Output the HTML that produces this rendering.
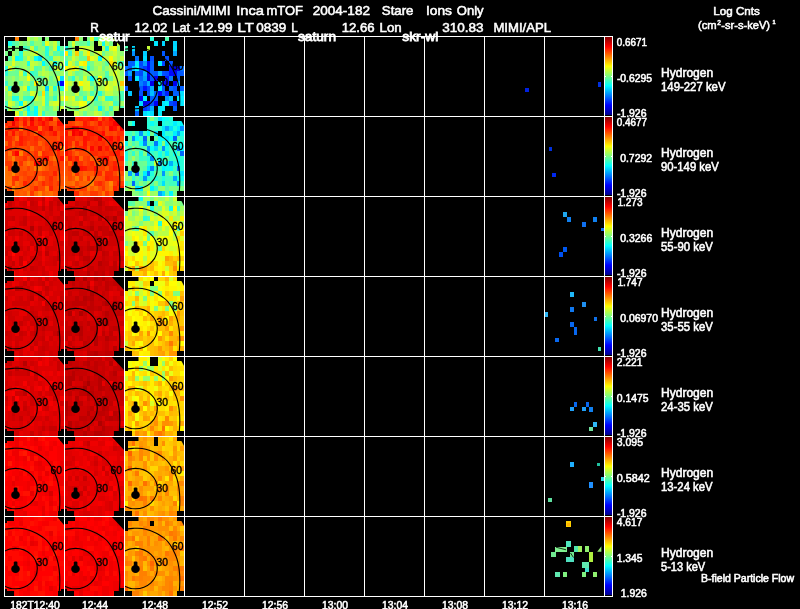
<!DOCTYPE html><html><head><meta charset="utf-8"><title>Cassini MIMI Inca mTOF</title><style>html,body{margin:0;padding:0;background:#000;overflow:hidden}svg{display:block}</style></head><body><svg width="800" height="609" viewBox="0 0 800 609" font-family="Liberation Sans, Arial, Helvetica, sans-serif">
<defs><filter id="gray" x="0" y="0" width="800" height="609" filterUnits="userSpaceOnUse" color-interpolation-filters="sRGB"><feColorMatrix type="saturate" values="0"/></filter><linearGradient id="jet" x1="0" y1="0" x2="0" y2="1"><stop offset="0" stop-color="#800000"/><stop offset="0.125" stop-color="#ff0000"/><stop offset="0.375" stop-color="#ffff00"/><stop offset="0.5" stop-color="#80ff80"/><stop offset="0.625" stop-color="#00ffff"/><stop offset="0.875" stop-color="#0000ff"/><stop offset="1" stop-color="#000090"/></linearGradient><g id="ov" fill="none" stroke="#000" stroke-width="1.1"><ellipse cx="11.5" cy="52.6" rx="21.8" ry="20.2"/><path d="M-2.0 13.6C2.0 12.7 6.6 12.5 10.0 12.3C13.4 12.1 15.5 12.1 18.2 12.5C20.9 12.9 23.6 13.7 26.0 14.5C28.4 15.3 30.8 16.5 32.9 17.6C35.0 18.7 36.8 19.8 38.5 21.0C40.2 22.2 41.6 23.1 43.3 25.0C44.9 26.9 46.8 29.4 48.4 32.4C50.0 35.4 51.8 39.2 52.9 42.7C54.0 46.2 54.6 49.4 55.1 53.1C55.6 56.8 55.8 60.7 55.8 64.9C55.8 69.1 55.4 74.7 55.1 78.2C54.9 81.7 54.6 83.4 54.3 86.0"/></g><g id="sat"><ellipse cx="11.5" cy="53" rx="4.3" ry="4" fill="#000"/><rect x="9.8" y="45.4" width="3.6" height="5" rx="1.2" fill="#000"/></g></defs>
<rect width="800" height="609" fill="#000"/>
<g transform="translate(4 36)"><g transform="scale(3.75 5)" shape-rendering="crispEdges"><path fill="#ff8000" d="M3 0h1v1h-1z"/><path fill="#bfff40" d="M6 0h1v1h-1zM14 4h1v1h-1zM7 6h1v1h-1zM10 7h1v1h-1zM10 10h1v1h-1zM12 10h1v1h-1zM12 13h1v1h-1zM9 15h1v1h-1z"/><path fill="#97ff68" d="M7 0h1v1h-1zM6 1h1v1h-1zM10 2h1v1h-1zM2 3h1v1h-1zM1 5h1v1h-1zM4 5h1v1h-1zM9 5h1v1h-1zM9 13h1v1h-1z"/><path fill="#b7ff48" d="M8 0h1v1h-1zM7 3h1v1h-1zM13 4h1v1h-1zM8 5h1v1h-1zM15 5h1v1h-1zM10 6h1v1h-1zM13 6h1v1h-1zM0 10h1v1h-1zM3 10h1v1h-1zM8 11h1v1h-1zM2 13h1v1h-1zM1 14h1v1h-1z"/><path fill="#87ff78" d="M9 0h1v1h-1zM11 0h1v1h-1zM3 2h1v1h-1zM9 2h1v1h-1zM5 4h1v1h-1zM15 4h1v1h-1zM0 5h1v1h-1zM14 7h1v1h-1zM1 8h1v1h-1zM1 9h1v1h-1zM3 9h1v1h-1zM0 11h1v1h-1zM3 11h1v1h-1zM0 12h1v1h-1z"/><path fill="#10ffef" d="M1 1h1v1h-1zM6 10h1v1h-1z"/><path fill="#48ffb7" d="M2 1h1v1h-1zM8 2h1v1h-1zM12 6h1v1h-1zM8 7h1v1h-1zM0 13h1v1h-1z"/><path fill="#60ff9f" d="M3 1h1v1h-1zM14 3h1v1h-1zM9 6h1v1h-1zM15 6h1v1h-1zM8 8h1v1h-1zM9 8h1v1h-1zM4 9h1v1h-1zM7 14h1v1h-1z"/><path fill="#8fff70" d="M4 1h1v1h-1zM8 1h1v1h-1zM9 1h1v1h-1zM9 3h1v1h-1zM10 4h1v1h-1zM4 6h1v1h-1zM12 7h1v1h-1zM7 8h1v1h-1zM13 8h1v1h-1zM2 9h1v1h-1zM6 9h1v1h-1zM9 9h1v1h-1zM8 13h1v1h-1zM10 14h1v1h-1z"/><path fill="#78ff87" d="M5 1h1v1h-1zM1 2h1v1h-1zM0 3h1v1h-1zM3 3h1v1h-1zM3 8h1v1h-1zM10 8h1v1h-1zM11 9h1v1h-1zM13 9h1v1h-1zM2 10h1v1h-1zM6 11h1v1h-1zM12 12h1v1h-1zM6 13h1v1h-1zM12 14h1v1h-1zM11 15h1v1h-1zM13 15h1v1h-1z"/><path fill="#50ffaf" d="M7 1h1v1h-1zM10 1h1v1h-1zM11 4h1v1h-1zM11 5h1v1h-1zM8 6h1v1h-1zM0 14h1v1h-1zM4 15h1v1h-1z"/><path fill="#e7ff18" d="M11 1h1v1h-1zM14 8h1v1h-1z"/><path fill="#9fff60" d="M12 1h1v1h-1zM12 3h1v1h-1zM7 4h1v1h-1zM3 5h1v1h-1zM5 5h1v1h-1zM2 6h1v1h-1zM5 6h1v1h-1zM9 7h1v1h-1zM15 7h1v1h-1zM2 8h1v1h-1zM5 8h1v1h-1zM5 9h1v1h-1zM9 10h1v1h-1zM1 12h1v1h-1zM4 12h1v1h-1z"/><path fill="#c7ff38" d="M13 1h1v1h-1zM7 2h1v1h-1zM13 2h1v1h-1zM2 4h1v1h-1zM7 5h1v1h-1zM6 7h1v1h-1zM1 11h1v1h-1zM8 12h1v1h-1z"/><path fill="#58ffa7" d="M14 1h1v1h-1zM6 2h1v1h-1zM13 3h1v1h-1zM1 4h1v1h-1zM7 9h1v1h-1zM10 9h1v1h-1zM7 13h1v1h-1zM11 14h1v1h-1z"/><path fill="#40ffbf" d="M5 2h1v1h-1zM5 12h1v1h-1zM11 12h1v1h-1zM11 13h1v1h-1z"/><path fill="#20ffdf" d="M11 2h1v1h-1zM4 3h1v1h-1zM4 4h1v1h-1zM13 10h1v1h-1zM15 10h1v1h-1zM2 12h1v1h-1zM3 12h1v1h-1zM7 12h1v1h-1z"/><path fill="#80ff80" d="M12 2h1v1h-1zM10 3h1v1h-1zM6 6h1v1h-1zM11 6h1v1h-1zM13 7h1v1h-1zM5 11h1v1h-1zM14 11h1v1h-1zM2 14h1v1h-1zM3 14h1v1h-1zM14 14h1v1h-1z"/><path fill="#00ffff" d="M14 2h1v1h-1zM3 4h1v1h-1zM10 5h1v1h-1zM4 13h1v1h-1zM8 15h1v1h-1z"/><path fill="#68ff97" d="M15 2h1v1h-1zM3 7h1v1h-1zM12 8h1v1h-1zM7 10h1v1h-1zM8 10h1v1h-1zM9 11h1v1h-1zM13 11h1v1h-1zM5 14h1v1h-1z"/><path fill="#afff50" d="M5 3h1v1h-1zM12 5h1v1h-1zM11 7h1v1h-1zM11 8h1v1h-1zM4 10h1v1h-1zM12 11h1v1h-1zM9 14h1v1h-1zM13 14h1v1h-1zM5 15h1v1h-1z"/><path fill="#a7ff58" d="M6 3h1v1h-1zM4 8h1v1h-1zM14 10h1v1h-1zM4 11h1v1h-1zM15 11h1v1h-1zM9 12h1v1h-1zM14 12h1v1h-1z"/><path fill="#cfff30" d="M8 3h1v1h-1zM6 4h1v1h-1zM4 7h1v1h-1zM5 13h1v1h-1zM4 14h1v1h-1zM15 14h1v1h-1z"/><path fill="#28ffd7" d="M11 3h1v1h-1zM0 6h1v1h-1zM0 7h1v1h-1z"/><path fill="#30ffcf" d="M15 3h1v1h-1zM7 7h1v1h-1zM1 10h1v1h-1zM10 15h1v1h-1z"/><path fill="#08fff7" d="M8 4h1v1h-1zM13 5h1v1h-1zM8 14h1v1h-1zM6 15h1v1h-1z"/><path fill="#00dfff" d="M9 4h1v1h-1zM15 8h1v1h-1z"/><path fill="#38ffc7" d="M12 4h1v1h-1zM5 7h1v1h-1zM0 9h1v1h-1zM11 11h1v1h-1zM6 12h1v1h-1zM13 12h1v1h-1zM7 15h1v1h-1z"/><path fill="#dfff20" d="M2 5h1v1h-1zM1 6h1v1h-1zM15 12h1v1h-1zM3 15h1v1h-1z"/><path fill="#18ffe7" d="M6 5h1v1h-1z"/><path fill="#70ff8f" d="M14 5h1v1h-1zM3 6h1v1h-1zM1 7h1v1h-1zM2 7h1v1h-1zM0 8h1v1h-1zM12 9h1v1h-1zM2 11h1v1h-1zM3 13h1v1h-1zM15 13h1v1h-1zM12 15h1v1h-1z"/><path fill="#d7ff28" d="M14 6h1v1h-1zM5 10h1v1h-1zM7 11h1v1h-1zM10 12h1v1h-1zM1 13h1v1h-1zM10 13h1v1h-1zM13 13h1v1h-1zM14 13h1v1h-1z"/><path fill="#f7ff08" d="M6 8h1v1h-1z"/><path fill="#ffef00" d="M8 9h1v1h-1z"/><path fill="#00cfff" d="M14 9h1v1h-1z"/><path fill="#0008ff" d="M15 9h1v1h-1z"/><path fill="#00d7ff" d="M11 10h1v1h-1z"/><path fill="#ffdf00" d="M10 11h1v1h-1z"/><path fill="#00efff" d="M6 14h1v1h-1z"/></g><svg x="0" y="0" width="60" height="80" overflow="hidden"><use href="#ov"/><path fill="#000" d="M0 0h10v5h-7v2h-3zM52.5 0h7.5v9zM0 73h3v2h7v5h-10zM54 75h3v-2h3v7h-6z"/><use href="#sat" y="0"/></svg></g>
<g transform="translate(64 36)"><g transform="scale(3.75 5)" shape-rendering="crispEdges"><path fill="#ff8000" d="M3 0h1v1h-1z"/><path fill="#8fff70" d="M4 0h1v1h-1zM14 2h1v1h-1zM15 3h1v1h-1zM15 7h1v1h-1zM10 9h1v1h-1zM14 9h1v1h-1zM1 10h1v1h-1zM2 11h1v1h-1zM14 11h1v1h-1zM4 12h1v1h-1zM0 14h1v1h-1z"/><path fill="#80ff80" d="M6 0h1v1h-1zM8 11h1v1h-1zM7 13h1v1h-1z"/><path fill="#dfff20" d="M7 0h1v1h-1zM10 0h1v1h-1zM1 5h1v1h-1zM13 5h1v1h-1zM13 7h1v1h-1zM6 9h1v1h-1zM11 9h1v1h-1zM2 12h1v1h-1z"/><path fill="#38ffc7" d="M8 0h1v1h-1z"/><path fill="#78ff87" d="M9 0h1v1h-1zM1 1h1v1h-1zM3 1h1v1h-1zM12 1h1v1h-1zM7 5h1v1h-1zM4 7h1v1h-1zM5 11h1v1h-1zM10 11h1v1h-1zM14 12h1v1h-1zM7 14h1v1h-1z"/><path fill="#cfff30" d="M11 0h1v1h-1zM13 0h1v1h-1zM4 2h1v1h-1zM5 2h1v1h-1zM13 3h1v1h-1zM3 6h1v1h-1zM1 7h1v1h-1zM5 8h1v1h-1zM12 10h1v1h-1zM14 10h1v1h-1zM6 12h1v1h-1z"/><path fill="#9fff60" d="M12 0h1v1h-1zM14 3h1v1h-1zM2 7h1v1h-1zM5 7h1v1h-1zM8 7h1v1h-1zM3 8h1v1h-1zM2 9h1v1h-1zM7 10h1v1h-1zM13 10h1v1h-1zM1 11h1v1h-1zM6 11h1v1h-1zM0 13h1v1h-1zM11 13h1v1h-1zM15 13h1v1h-1zM11 14h1v1h-1zM4 15h1v1h-1z"/><path fill="#a7ff58" d="M14 0h1v1h-1zM3 4h1v1h-1zM9 5h1v1h-1zM15 6h1v1h-1zM7 7h1v1h-1zM9 7h1v1h-1zM15 8h1v1h-1zM2 10h1v1h-1zM9 10h1v1h-1zM0 11h1v1h-1zM13 14h1v1h-1zM14 14h1v1h-1z"/><path fill="#d7ff28" d="M2 1h1v1h-1zM12 2h1v1h-1zM9 3h1v1h-1zM2 4h1v1h-1zM1 6h1v1h-1zM5 9h1v1h-1zM13 9h1v1h-1zM5 10h1v1h-1zM6 10h1v1h-1zM7 12h1v1h-1z"/><path fill="#68ff97" d="M4 1h1v1h-1zM1 2h1v1h-1zM4 3h1v1h-1zM10 3h1v1h-1zM4 4h1v1h-1zM5 4h1v1h-1zM4 6h1v1h-1zM3 7h1v1h-1zM4 8h1v1h-1zM3 12h1v1h-1zM5 15h1v1h-1z"/><path fill="#70ff8f" d="M5 1h1v1h-1zM3 5h1v1h-1zM7 6h1v1h-1zM10 6h1v1h-1zM12 8h1v1h-1zM3 14h1v1h-1zM10 15h1v1h-1zM13 15h1v1h-1z"/><path fill="#40ffbf" d="M6 1h1v1h-1zM13 13h1v1h-1zM12 14h1v1h-1z"/><path fill="#97ff68" d="M7 1h1v1h-1zM7 3h1v1h-1zM11 3h1v1h-1zM14 4h1v1h-1zM8 6h1v1h-1zM11 6h1v1h-1zM6 7h1v1h-1zM10 7h1v1h-1zM8 9h1v1h-1zM13 11h1v1h-1zM9 12h1v1h-1zM10 13h1v1h-1zM2 14h1v1h-1zM6 14h1v1h-1zM8 14h1v1h-1zM6 15h1v1h-1zM7 15h1v1h-1z"/><path fill="#b7ff48" d="M9 1h1v1h-1zM10 2h1v1h-1zM2 3h1v1h-1zM13 4h1v1h-1zM12 6h1v1h-1zM13 6h1v1h-1zM12 7h1v1h-1zM14 7h1v1h-1zM0 8h1v1h-1zM10 10h1v1h-1zM5 14h1v1h-1zM2 15h1v1h-1z"/><path fill="#10ffef" d="M10 1h1v1h-1z"/><path fill="#afff50" d="M11 1h1v1h-1zM2 2h1v1h-1zM7 2h1v1h-1zM12 3h1v1h-1zM2 5h1v1h-1zM8 5h1v1h-1zM5 6h1v1h-1zM1 13h1v1h-1zM9 15h1v1h-1z"/><path fill="#c7ff38" d="M14 1h1v1h-1zM6 2h1v1h-1zM5 3h1v1h-1zM8 4h1v1h-1zM10 4h1v1h-1zM14 6h1v1h-1zM1 9h1v1h-1zM9 9h1v1h-1zM3 11h1v1h-1zM10 12h1v1h-1zM2 13h1v1h-1zM3 13h1v1h-1zM4 14h1v1h-1zM3 15h1v1h-1zM8 15h1v1h-1z"/><path fill="#18ffe7" d="M0 2h1v1h-1zM6 6h1v1h-1z"/><path fill="#20ffdf" d="M11 2h1v1h-1zM9 11h1v1h-1z"/><path fill="#efff10" d="M13 2h1v1h-1zM4 5h1v1h-1z"/><path fill="#ffe700" d="M0 3h1v1h-1z"/><path fill="#30ffcf" d="M1 3h1v1h-1zM5 12h1v1h-1zM11 12h1v1h-1zM12 12h1v1h-1z"/><path fill="#ffcf00" d="M3 3h1v1h-1z"/><path fill="#ffef00" d="M6 3h1v1h-1zM5 5h1v1h-1zM2 6h1v1h-1zM0 12h1v1h-1z"/><path fill="#bfff40" d="M8 3h1v1h-1zM11 4h1v1h-1zM15 4h1v1h-1zM9 6h1v1h-1zM13 8h1v1h-1zM14 8h1v1h-1zM3 9h1v1h-1zM12 9h1v1h-1zM15 10h1v1h-1zM11 11h1v1h-1zM12 11h1v1h-1zM1 12h1v1h-1zM12 13h1v1h-1z"/><path fill="#60ff9f" d="M0 4h1v1h-1zM11 5h1v1h-1zM1 8h1v1h-1zM6 8h1v1h-1zM8 8h1v1h-1zM7 9h1v1h-1zM4 11h1v1h-1zM13 12h1v1h-1zM8 13h1v1h-1zM9 13h1v1h-1zM10 14h1v1h-1z"/><path fill="#87ff78" d="M1 4h1v1h-1zM10 5h1v1h-1zM0 7h1v1h-1zM10 8h1v1h-1zM4 10h1v1h-1zM1 14h1v1h-1zM12 15h1v1h-1z"/><path fill="#ffbf00" d="M6 4h1v1h-1zM3 10h1v1h-1z"/><path fill="#e7ff18" d="M7 4h1v1h-1zM0 10h1v1h-1zM11 10h1v1h-1zM5 13h1v1h-1z"/><path fill="#00ffff" d="M9 4h1v1h-1zM7 8h1v1h-1z"/><path fill="#fff700" d="M12 4h1v1h-1zM0 6h1v1h-1zM4 9h1v1h-1z"/><path fill="#28ffd7" d="M0 5h1v1h-1zM2 8h1v1h-1zM8 12h1v1h-1z"/><path fill="#48ffb7" d="M6 5h1v1h-1zM11 8h1v1h-1zM7 11h1v1h-1zM15 11h1v1h-1zM15 12h1v1h-1zM15 14h1v1h-1zM11 15h1v1h-1z"/><path fill="#ffdf00" d="M12 5h1v1h-1z"/><path fill="#58ffa7" d="M14 5h1v1h-1zM8 10h1v1h-1z"/><path fill="#50ffaf" d="M15 5h1v1h-1zM11 7h1v1h-1zM6 13h1v1h-1zM14 13h1v1h-1z"/><path fill="#ffff00" d="M9 8h1v1h-1z"/><path fill="#f7ff08" d="M0 9h1v1h-1zM4 13h1v1h-1z"/><path fill="#ffc700" d="M15 9h1v1h-1z"/><path fill="#00f7ff" d="M9 14h1v1h-1z"/></g><svg x="0" y="0" width="60" height="80" overflow="hidden"><use href="#ov"/><path fill="#000" d="M0 0h11v5h-7v3h-4zM47 0h13v14zM0 73h3v2h7v5h-10zM50 75h6v-3h4v8h-10z"/><use href="#sat" y="0"/></svg></g>
<g transform="translate(124 36)"><g transform="scale(3.75 5)" shape-rendering="crispEdges"><path fill="#28ffd7" d="M7 0h1v1h-1z"/><path fill="#50ffaf" d="M11 0h1v1h-1zM0 2h1v1h-1z"/><path fill="#00e7ff" d="M8 1h1v1h-1zM3 8h1v1h-1zM9 10h1v1h-1zM10 13h1v1h-1zM15 13h1v1h-1z"/><path fill="#00d7ff" d="M10 1h1v1h-1zM13 1h1v1h-1zM2 2h1v1h-1zM4 13h1v1h-1z"/><path fill="#c7ff38" d="M6 2h1v1h-1z"/><path fill="#00dfff" d="M13 2h1v1h-1zM5 4h1v1h-1zM15 11h1v1h-1zM5 15h1v1h-1zM7 15h1v1h-1z"/><path fill="#008fff" d="M2 3h1v1h-1z"/><path fill="#00cfff" d="M5 3h1v1h-1z"/><path fill="#0058ff" d="M10 3h1v1h-1zM1 6h1v1h-1zM4 6h1v1h-1zM0 7h1v1h-1zM8 7h1v1h-1zM14 7h1v1h-1zM15 7h1v1h-1zM7 8h1v1h-1zM14 8h1v1h-1zM5 9h1v1h-1zM0 10h1v1h-1zM4 10h1v1h-1zM10 10h1v1h-1zM10 11h1v1h-1zM8 12h1v1h-1zM6 14h1v1h-1z"/><path fill="#00a7ff" d="M13 3h1v1h-1z"/><path fill="#0070ff" d="M3 4h1v1h-1zM0 6h1v1h-1zM15 6h1v1h-1z"/><path fill="#0050ff" d="M7 4h1v1h-1zM11 4h1v1h-1zM12 5h1v1h-1zM10 7h1v1h-1zM13 10h1v1h-1zM4 11h1v1h-1zM6 11h1v1h-1zM7 13h1v1h-1z"/><path fill="#0060ff" d="M1 5h1v1h-1zM2 5h1v1h-1zM7 5h1v1h-1zM7 6h1v1h-1zM3 7h1v1h-1zM7 7h1v1h-1zM15 10h1v1h-1zM13 11h1v1h-1zM14 11h1v1h-1zM7 12h1v1h-1zM13 14h1v1h-1zM3 15h1v1h-1z"/><path fill="#00efff" d="M3 5h1v1h-1zM9 5h1v1h-1zM9 9h1v1h-1zM5 12h1v1h-1zM14 12h1v1h-1zM15 12h1v1h-1zM9 14h1v1h-1zM10 14h1v1h-1zM9 15h1v1h-1z"/><path fill="#0048ff" d="M4 5h1v1h-1zM4 7h1v1h-1zM11 7h1v1h-1zM1 8h1v1h-1zM6 10h1v1h-1zM12 13h1v1h-1z"/><path fill="#0097ff" d="M5 5h1v1h-1zM11 12h1v1h-1z"/><path fill="#0008ff" d="M6 5h1v1h-1zM6 6h1v1h-1zM12 7h1v1h-1zM10 9h1v1h-1z"/><path fill="#0040ff" d="M10 5h1v1h-1z"/><path fill="#00bfff" d="M2 6h1v1h-1zM7 11h1v1h-1z"/><path fill="#00f7ff" d="M3 6h1v1h-1zM11 13h1v1h-1zM6 15h1v1h-1z"/><path fill="#0038ff" d="M5 6h1v1h-1zM5 14h1v1h-1z"/><path fill="#0010ff" d="M12 6h1v1h-1zM5 10h1v1h-1z"/><path fill="#0000e7" d="M13 6h1v1h-1zM14 6h1v1h-1zM7 9h1v1h-1z"/><path fill="#009fff" d="M1 7h1v1h-1zM5 8h1v1h-1z"/><path fill="#00afff" d="M5 7h1v1h-1zM6 9h1v1h-1zM14 9h1v1h-1zM7 10h1v1h-1zM7 14h1v1h-1z"/><path fill="#0000f7" d="M6 7h1v1h-1zM13 7h1v1h-1zM8 8h1v1h-1zM11 9h1v1h-1zM6 13h1v1h-1zM8 13h1v1h-1z"/><path fill="#00b7ff" d="M9 7h1v1h-1z"/><path fill="#0068ff" d="M4 8h1v1h-1zM12 10h1v1h-1zM8 11h1v1h-1z"/><path fill="#0000df" d="M6 8h1v1h-1zM5 13h1v1h-1z"/><path fill="#0018ff" d="M11 8h1v1h-1z"/><path fill="#0078ff" d="M12 8h1v1h-1z"/><path fill="#0080ff" d="M4 9h1v1h-1z"/><path fill="#0000ef" d="M13 9h1v1h-1zM4 12h1v1h-1z"/><path fill="#00c7ff" d="M1 11h1v1h-1zM12 12h1v1h-1zM3 14h1v1h-1z"/><path fill="#0000ff" d="M9 11h1v1h-1z"/><path fill="#0020ff" d="M11 11h1v1h-1z"/><path fill="#0030ff" d="M13 13h1v1h-1z"/></g><svg x="0" y="0" width="60" height="80" overflow="hidden"><use href="#ov"/><path fill="#000" d="M0 0h14.5v5h-10.5v5h-4zM53 0h7v10l-2-4l-2-3zM0 75h8v5h-8zM53 75h7v5h-7z"/><use href="#sat" y="0"/></svg></g>
<g transform="translate(4 116)"><g transform="scale(3.75 5)" shape-rendering="crispEdges"><path fill="#ff1000" d="M2 0h1v1h-1zM11 0h1v1h-1zM5 1h1v1h-1zM15 1h1v1h-1zM2 3h1v1h-1zM9 3h1v1h-1zM13 3h1v1h-1zM15 8h1v1h-1zM9 9h1v1h-1z"/><path fill="#ff0000" d="M3 0h1v1h-1zM14 6h1v1h-1zM3 7h1v1h-1z"/><path fill="#ff3800" d="M4 0h1v1h-1zM6 0h1v1h-1zM10 0h1v1h-1zM1 1h1v1h-1zM8 1h1v1h-1zM11 3h1v1h-1zM7 4h1v1h-1zM7 5h1v1h-1zM9 6h1v1h-1zM11 6h1v1h-1zM13 6h1v1h-1zM12 7h1v1h-1zM0 9h1v1h-1zM1 9h1v1h-1zM12 9h1v1h-1zM8 11h1v1h-1zM10 11h1v1h-1zM11 11h1v1h-1zM6 12h1v1h-1zM2 13h1v1h-1zM6 13h1v1h-1zM14 13h1v1h-1zM7 15h1v1h-1z"/><path fill="#ff1800" d="M5 0h1v1h-1zM1 2h1v1h-1zM3 2h1v1h-1zM6 2h1v1h-1zM7 2h1v1h-1zM8 2h1v1h-1zM0 3h1v1h-1zM4 4h1v1h-1zM4 5h1v1h-1z"/><path fill="#e70000" d="M7 0h1v1h-1zM12 0h1v1h-1zM12 2h1v1h-1z"/><path fill="#ff3000" d="M8 0h1v1h-1zM14 0h1v1h-1zM5 2h1v1h-1zM14 2h1v1h-1zM15 3h1v1h-1zM6 4h1v1h-1zM3 5h1v1h-1zM5 5h1v1h-1zM8 5h1v1h-1zM11 5h1v1h-1zM13 5h1v1h-1zM1 6h1v1h-1zM6 7h1v1h-1zM8 7h1v1h-1zM11 7h1v1h-1zM5 8h1v1h-1zM8 8h1v1h-1zM4 9h1v1h-1zM1 10h1v1h-1zM14 10h1v1h-1zM2 12h1v1h-1zM8 12h1v1h-1zM12 13h1v1h-1z"/><path fill="#ff0800" d="M9 0h1v1h-1zM7 1h1v1h-1zM10 1h1v1h-1zM14 1h1v1h-1zM11 8h1v1h-1zM8 9h1v1h-1z"/><path fill="#ff6800" d="M13 0h1v1h-1zM4 2h1v1h-1zM9 2h1v1h-1zM3 4h1v1h-1zM7 6h1v1h-1zM10 10h1v1h-1zM1 11h1v1h-1zM5 14h1v1h-1zM15 14h1v1h-1zM2 15h1v1h-1zM8 15h1v1h-1zM11 15h1v1h-1z"/><path fill="#ff2800" d="M0 1h1v1h-1zM3 1h1v1h-1zM11 1h1v1h-1zM10 2h1v1h-1zM15 2h1v1h-1zM4 3h1v1h-1zM6 3h1v1h-1zM10 3h1v1h-1zM12 3h1v1h-1zM0 4h1v1h-1zM1 4h1v1h-1zM5 4h1v1h-1zM8 4h1v1h-1zM1 5h1v1h-1zM0 6h1v1h-1zM12 6h1v1h-1zM2 7h1v1h-1zM10 7h1v1h-1zM14 7h1v1h-1zM14 8h1v1h-1zM3 12h1v1h-1zM12 12h1v1h-1zM10 13h1v1h-1zM8 14h1v1h-1z"/><path fill="#ef0000" d="M2 1h1v1h-1z"/><path fill="#ff5000" d="M4 1h1v1h-1zM6 1h1v1h-1zM13 1h1v1h-1zM14 4h1v1h-1zM10 6h1v1h-1zM11 9h1v1h-1zM13 9h1v1h-1zM4 10h1v1h-1zM6 11h1v1h-1zM7 11h1v1h-1zM14 11h1v1h-1zM15 12h1v1h-1zM7 13h1v1h-1zM15 13h1v1h-1zM14 14h1v1h-1z"/><path fill="#ff2000" d="M9 1h1v1h-1zM2 2h1v1h-1zM11 2h1v1h-1zM15 4h1v1h-1zM14 5h1v1h-1zM15 5h1v1h-1zM10 8h1v1h-1zM14 9h1v1h-1zM13 11h1v1h-1zM5 13h1v1h-1zM12 14h1v1h-1z"/><path fill="#ff4800" d="M12 1h1v1h-1zM3 3h1v1h-1zM14 3h1v1h-1zM10 4h1v1h-1zM6 5h1v1h-1zM10 5h1v1h-1zM2 6h1v1h-1zM4 6h1v1h-1zM5 6h1v1h-1zM0 7h1v1h-1zM7 7h1v1h-1zM13 7h1v1h-1zM0 8h1v1h-1zM3 8h1v1h-1zM3 10h1v1h-1zM4 11h1v1h-1zM9 11h1v1h-1zM15 11h1v1h-1zM5 12h1v1h-1zM13 12h1v1h-1zM9 13h1v1h-1zM13 13h1v1h-1zM7 14h1v1h-1zM9 14h1v1h-1zM10 14h1v1h-1zM13 14h1v1h-1zM14 15h1v1h-1z"/><path fill="#ff4000" d="M0 2h1v1h-1zM13 2h1v1h-1zM1 3h1v1h-1zM5 3h1v1h-1zM7 3h1v1h-1zM2 4h1v1h-1zM9 4h1v1h-1zM11 4h1v1h-1zM12 4h1v1h-1zM13 4h1v1h-1zM12 5h1v1h-1zM3 6h1v1h-1zM6 6h1v1h-1zM8 6h1v1h-1zM5 7h1v1h-1zM15 7h1v1h-1zM4 8h1v1h-1zM7 8h1v1h-1zM9 8h1v1h-1zM15 9h1v1h-1zM6 10h1v1h-1zM12 10h1v1h-1zM13 10h1v1h-1zM15 10h1v1h-1zM5 11h1v1h-1zM12 11h1v1h-1zM7 12h1v1h-1zM11 12h1v1h-1zM11 13h1v1h-1zM1 14h1v1h-1z"/><path fill="#ff5800" d="M8 3h1v1h-1zM2 5h1v1h-1zM1 8h1v1h-1zM6 8h1v1h-1zM12 8h1v1h-1zM10 9h1v1h-1zM5 10h1v1h-1zM7 10h1v1h-1zM11 10h1v1h-1zM3 11h1v1h-1zM4 12h1v1h-1zM4 13h1v1h-1zM0 14h1v1h-1zM4 14h1v1h-1zM3 15h1v1h-1zM5 15h1v1h-1zM10 15h1v1h-1zM13 15h1v1h-1z"/><path fill="#ff6000" d="M0 5h1v1h-1zM9 5h1v1h-1zM2 9h1v1h-1zM3 9h1v1h-1zM5 9h1v1h-1zM7 9h1v1h-1zM2 10h1v1h-1zM10 12h1v1h-1zM14 12h1v1h-1zM8 13h1v1h-1zM3 14h1v1h-1zM6 14h1v1h-1zM4 15h1v1h-1z"/><path fill="#ff7800" d="M15 6h1v1h-1zM9 7h1v1h-1zM6 9h1v1h-1zM8 10h1v1h-1zM1 13h1v1h-1zM11 14h1v1h-1zM6 15h1v1h-1z"/><path fill="#ff7000" d="M1 7h1v1h-1zM13 8h1v1h-1zM0 10h1v1h-1zM0 11h1v1h-1zM0 12h1v1h-1zM1 12h1v1h-1zM9 12h1v1h-1zM0 13h1v1h-1zM3 13h1v1h-1zM12 15h1v1h-1z"/><path fill="#ff8000" d="M4 7h1v1h-1zM2 8h1v1h-1zM9 10h1v1h-1z"/><path fill="#ff8700" d="M2 11h1v1h-1zM2 14h1v1h-1zM9 15h1v1h-1z"/></g><svg x="0" y="0" width="60" height="80" overflow="hidden"><use href="#ov"/><path fill="#000" d="M0 0h10v5h-7v2h-3zM52.5 0h7.5v9zM0 73h3v2h7v5h-10zM54 75h3v-2h3v7h-6z"/><use href="#sat" y="0"/></svg></g>
<g transform="translate(64 116)"><g transform="scale(3.75 5)" shape-rendering="crispEdges"><path fill="#ff0800" d="M2 0h1v1h-1zM7 0h1v1h-1zM12 0h1v1h-1zM10 3h1v1h-1zM12 4h1v1h-1zM7 6h1v1h-1zM11 8h1v1h-1z"/><path fill="#ff2000" d="M3 0h1v1h-1zM5 0h1v1h-1zM0 2h1v1h-1zM1 2h1v1h-1zM7 2h1v1h-1zM8 3h1v1h-1zM9 3h1v1h-1zM0 4h1v1h-1zM3 5h1v1h-1zM14 5h1v1h-1zM3 8h1v1h-1zM9 8h1v1h-1zM14 8h1v1h-1zM13 9h1v1h-1zM2 10h1v1h-1zM11 12h1v1h-1zM14 13h1v1h-1zM13 14h1v1h-1z"/><path fill="#ff1800" d="M4 0h1v1h-1zM6 0h1v1h-1zM8 0h1v1h-1zM10 0h1v1h-1zM5 1h1v1h-1zM12 1h1v1h-1zM5 2h1v1h-1zM6 2h1v1h-1zM6 3h1v1h-1zM7 3h1v1h-1zM6 4h1v1h-1zM11 4h1v1h-1zM0 5h1v1h-1zM12 5h1v1h-1zM0 6h1v1h-1zM5 6h1v1h-1zM11 6h1v1h-1zM13 7h1v1h-1zM14 7h1v1h-1zM1 8h1v1h-1zM10 8h1v1h-1zM15 8h1v1h-1zM5 10h1v1h-1zM13 10h1v1h-1zM15 14h1v1h-1z"/><path fill="#ff5800" d="M9 0h1v1h-1zM3 1h1v1h-1zM1 3h1v1h-1zM2 5h1v1h-1zM13 8h1v1h-1zM11 10h1v1h-1zM6 11h1v1h-1zM7 11h1v1h-1zM2 12h1v1h-1zM8 12h1v1h-1zM9 12h1v1h-1zM7 14h1v1h-1zM6 15h1v1h-1zM12 15h1v1h-1z"/><path fill="#ff3000" d="M11 0h1v1h-1zM6 1h1v1h-1zM10 1h1v1h-1zM8 2h1v1h-1zM10 2h1v1h-1zM14 3h1v1h-1zM15 3h1v1h-1zM8 4h1v1h-1zM13 4h1v1h-1zM7 5h1v1h-1zM9 5h1v1h-1zM3 6h1v1h-1zM8 6h1v1h-1zM10 6h1v1h-1zM10 7h1v1h-1zM2 9h1v1h-1zM3 9h1v1h-1zM4 9h1v1h-1zM10 9h1v1h-1zM6 10h1v1h-1zM7 10h1v1h-1zM12 10h1v1h-1zM3 11h1v1h-1zM8 11h1v1h-1zM6 12h1v1h-1zM13 12h1v1h-1zM14 12h1v1h-1z"/><path fill="#ff2800" d="M13 0h1v1h-1zM11 1h1v1h-1zM4 2h1v1h-1zM1 4h1v1h-1zM2 4h1v1h-1zM7 4h1v1h-1zM1 5h1v1h-1zM8 5h1v1h-1zM10 5h1v1h-1zM13 5h1v1h-1zM4 6h1v1h-1zM1 7h1v1h-1zM7 7h1v1h-1zM8 7h1v1h-1zM12 7h1v1h-1zM7 9h1v1h-1zM11 9h1v1h-1zM14 10h1v1h-1zM15 10h1v1h-1zM9 11h1v1h-1zM11 11h1v1h-1zM12 11h1v1h-1zM12 12h1v1h-1zM9 13h1v1h-1zM2 15h1v1h-1zM3 15h1v1h-1z"/><path fill="#ff3800" d="M0 1h1v1h-1zM1 1h1v1h-1zM4 4h1v1h-1zM10 4h1v1h-1zM11 5h1v1h-1zM1 6h1v1h-1zM12 6h1v1h-1zM9 7h1v1h-1zM11 7h1v1h-1zM2 8h1v1h-1zM6 8h1v1h-1zM6 9h1v1h-1zM12 9h1v1h-1zM15 9h1v1h-1zM1 10h1v1h-1zM8 13h1v1h-1zM15 13h1v1h-1zM1 14h1v1h-1zM2 14h1v1h-1zM4 14h1v1h-1zM10 14h1v1h-1zM14 14h1v1h-1zM7 15h1v1h-1zM8 15h1v1h-1zM11 15h1v1h-1zM13 15h1v1h-1z"/><path fill="#ff4000" d="M2 1h1v1h-1zM8 1h1v1h-1zM9 2h1v1h-1zM14 2h1v1h-1zM12 3h1v1h-1zM3 4h1v1h-1zM15 4h1v1h-1zM6 5h1v1h-1zM15 7h1v1h-1zM5 8h1v1h-1zM0 9h1v1h-1zM14 9h1v1h-1zM9 10h1v1h-1zM10 10h1v1h-1zM10 13h1v1h-1zM13 13h1v1h-1zM5 14h1v1h-1z"/><path fill="#ff5000" d="M4 1h1v1h-1zM7 1h1v1h-1zM6 6h1v1h-1zM0 10h1v1h-1zM0 11h1v1h-1zM4 11h1v1h-1zM10 12h1v1h-1zM9 14h1v1h-1zM5 15h1v1h-1zM9 15h1v1h-1z"/><path fill="#ff1000" d="M9 1h1v1h-1zM13 2h1v1h-1zM0 3h1v1h-1zM3 3h1v1h-1zM5 4h1v1h-1zM14 4h1v1h-1zM5 5h1v1h-1zM14 6h1v1h-1zM15 6h1v1h-1zM0 7h1v1h-1zM4 10h1v1h-1zM8 10h1v1h-1z"/><path fill="#f70000" d="M13 1h1v1h-1zM2 2h1v1h-1zM15 2h1v1h-1zM2 3h1v1h-1z"/><path fill="#e70000" d="M14 1h1v1h-1z"/><path fill="#ff0000" d="M3 2h1v1h-1zM12 2h1v1h-1zM9 4h1v1h-1z"/><path fill="#ff4800" d="M11 2h1v1h-1zM5 3h1v1h-1zM11 3h1v1h-1zM13 3h1v1h-1zM4 5h1v1h-1zM13 6h1v1h-1zM2 7h1v1h-1zM4 7h1v1h-1zM5 7h1v1h-1zM6 7h1v1h-1zM8 8h1v1h-1zM12 8h1v1h-1zM5 9h1v1h-1zM8 9h1v1h-1zM3 10h1v1h-1zM1 11h1v1h-1zM13 11h1v1h-1zM15 11h1v1h-1zM1 12h1v1h-1zM4 12h1v1h-1zM3 13h1v1h-1zM0 14h1v1h-1z"/><path fill="#ef0000" d="M4 3h1v1h-1zM9 6h1v1h-1z"/><path fill="#ff7000" d="M15 5h1v1h-1zM2 11h1v1h-1zM5 12h1v1h-1zM2 13h1v1h-1zM8 14h1v1h-1zM10 15h1v1h-1z"/><path fill="#ff6000" d="M2 6h1v1h-1zM3 7h1v1h-1zM7 8h1v1h-1zM5 11h1v1h-1zM10 11h1v1h-1zM14 11h1v1h-1zM0 12h1v1h-1zM15 12h1v1h-1zM4 13h1v1h-1zM5 13h1v1h-1zM11 13h1v1h-1zM3 14h1v1h-1zM11 14h1v1h-1zM4 15h1v1h-1z"/><path fill="#ff6800" d="M0 8h1v1h-1zM4 8h1v1h-1zM1 9h1v1h-1zM9 9h1v1h-1zM7 12h1v1h-1zM0 13h1v1h-1zM1 13h1v1h-1zM6 13h1v1h-1z"/><path fill="#ff8000" d="M3 12h1v1h-1zM7 13h1v1h-1z"/><path fill="#ff8700" d="M12 13h1v1h-1z"/><path fill="#ff7800" d="M6 14h1v1h-1zM12 14h1v1h-1z"/></g><svg x="0" y="0" width="60" height="80" overflow="hidden"><use href="#ov"/><path fill="#000" d="M0 0h11v5h-7v3h-4zM47 0h13v14zM0 73h3v2h7v5h-10zM50 75h6v-3h4v8h-10z"/><use href="#sat" y="0"/></svg></g>
<g transform="translate(124 116)"><g transform="scale(3.75 5)" shape-rendering="crispEdges"><path fill="#30ffcf" d="M6 0h1v1h-1zM9 2h1v1h-1zM11 3h1v1h-1zM12 3h1v1h-1zM4 4h1v1h-1zM13 6h1v1h-1zM2 7h1v1h-1zM7 7h1v1h-1zM10 8h1v1h-1zM12 8h1v1h-1zM2 9h1v1h-1zM8 10h1v1h-1zM2 12h1v1h-1zM6 12h1v1h-1z"/><path fill="#87ff78" d="M7 0h1v1h-1zM10 5h1v1h-1zM12 11h1v1h-1zM1 12h1v1h-1zM4 13h1v1h-1zM8 13h1v1h-1z"/><path fill="#40ffbf" d="M8 0h1v1h-1zM7 2h1v1h-1zM13 5h1v1h-1zM12 6h1v1h-1zM12 7h1v1h-1zM5 8h1v1h-1zM8 8h1v1h-1zM13 8h1v1h-1zM9 10h1v1h-1zM13 10h1v1h-1zM13 11h1v1h-1zM4 12h1v1h-1zM9 12h1v1h-1zM11 12h1v1h-1zM12 12h1v1h-1zM12 13h1v1h-1zM13 13h1v1h-1zM15 13h1v1h-1z"/><path fill="#00d7ff" d="M9 0h1v1h-1zM8 6h1v1h-1z"/><path fill="#00ffff" d="M10 0h1v1h-1zM6 3h1v1h-1z"/><path fill="#10ffef" d="M11 0h1v1h-1zM15 3h1v1h-1zM10 4h1v1h-1zM0 5h1v1h-1zM4 5h1v1h-1zM9 5h1v1h-1zM9 7h1v1h-1zM14 8h1v1h-1zM11 9h1v1h-1zM11 10h1v1h-1zM15 12h1v1h-1z"/><path fill="#28ffd7" d="M12 0h1v1h-1zM6 1h1v1h-1zM8 1h1v1h-1zM11 1h1v1h-1zM6 2h1v1h-1zM3 3h1v1h-1zM15 4h1v1h-1zM6 8h1v1h-1zM15 8h1v1h-1zM6 9h1v1h-1zM15 9h1v1h-1zM15 10h1v1h-1zM8 12h1v1h-1z"/><path fill="#50ffaf" d="M1 1h1v1h-1zM6 5h1v1h-1zM12 5h1v1h-1zM4 6h1v1h-1zM5 6h1v1h-1zM11 13h1v1h-1z"/><path fill="#08fff7" d="M2 1h1v1h-1zM7 1h1v1h-1zM3 4h1v1h-1zM9 4h1v1h-1zM12 4h1v1h-1zM7 6h1v1h-1zM13 7h1v1h-1zM12 10h1v1h-1z"/><path fill="#18ffe7" d="M10 1h1v1h-1zM12 1h1v1h-1zM14 1h1v1h-1zM15 5h1v1h-1zM11 6h1v1h-1zM0 7h1v1h-1zM9 8h1v1h-1z"/><path fill="#00efff" d="M13 1h1v1h-1zM14 2h1v1h-1zM10 3h1v1h-1zM13 3h1v1h-1zM11 5h1v1h-1zM11 7h1v1h-1zM14 9h1v1h-1zM6 10h1v1h-1zM5 11h1v1h-1zM4 14h1v1h-1z"/><path fill="#00f7ff" d="M15 1h1v1h-1zM15 6h1v1h-1zM10 10h1v1h-1zM7 14h1v1h-1zM12 15h1v1h-1z"/><path fill="#48ffb7" d="M8 2h1v1h-1zM2 5h1v1h-1zM1 6h1v1h-1zM9 6h1v1h-1zM8 7h1v1h-1zM10 7h1v1h-1zM2 11h1v1h-1zM0 13h1v1h-1zM3 13h1v1h-1zM7 13h1v1h-1z"/><path fill="#00e7ff" d="M10 2h1v1h-1zM11 4h1v1h-1zM15 11h1v1h-1zM3 14h1v1h-1z"/><path fill="#009fff" d="M11 2h1v1h-1zM1 11h1v1h-1z"/><path fill="#00dfff" d="M12 2h1v1h-1zM8 3h1v1h-1zM10 13h1v1h-1zM10 15h1v1h-1z"/><path fill="#20ffdf" d="M13 2h1v1h-1zM14 5h1v1h-1zM4 7h1v1h-1zM0 8h1v1h-1zM13 9h1v1h-1zM7 11h1v1h-1zM10 12h1v1h-1zM14 12h1v1h-1z"/><path fill="#008fff" d="M15 2h1v1h-1zM6 6h1v1h-1zM10 6h1v1h-1zM9 9h1v1h-1z"/><path fill="#38ffc7" d="M0 3h1v1h-1zM1 3h1v1h-1zM5 3h1v1h-1zM7 5h1v1h-1zM4 8h1v1h-1zM7 9h1v1h-1zM10 9h1v1h-1zM7 12h1v1h-1zM9 13h1v1h-1zM8 14h1v1h-1z"/><path fill="#60ff9f" d="M2 3h1v1h-1zM1 4h1v1h-1zM0 6h1v1h-1zM11 8h1v1h-1zM3 9h1v1h-1zM8 11h1v1h-1zM14 11h1v1h-1zM3 12h1v1h-1zM5 13h1v1h-1zM11 14h1v1h-1zM4 15h1v1h-1z"/><path fill="#0097ff" d="M4 3h1v1h-1zM2 4h1v1h-1zM10 11h1v1h-1zM5 12h1v1h-1z"/><path fill="#70ff8f" d="M7 3h1v1h-1zM1 8h1v1h-1zM3 8h1v1h-1zM5 9h1v1h-1zM14 14h1v1h-1z"/><path fill="#00a7ff" d="M14 3h1v1h-1zM13 12h1v1h-1zM9 15h1v1h-1z"/><path fill="#0060ff" d="M5 4h1v1h-1zM13 4h1v1h-1zM2 10h1v1h-1z"/><path fill="#68ff97" d="M6 4h1v1h-1zM3 5h1v1h-1zM1 7h1v1h-1zM4 9h1v1h-1zM4 10h1v1h-1zM1 13h1v1h-1zM11 15h1v1h-1z"/><path fill="#58ffa7" d="M8 4h1v1h-1zM14 4h1v1h-1zM3 6h1v1h-1zM14 7h1v1h-1zM0 9h1v1h-1zM3 10h1v1h-1zM5 10h1v1h-1zM4 11h1v1h-1zM9 11h1v1h-1zM11 11h1v1h-1z"/><path fill="#80ff80" d="M1 5h1v1h-1zM3 7h1v1h-1zM5 7h1v1h-1zM1 10h1v1h-1zM12 14h1v1h-1zM13 14h1v1h-1zM15 14h1v1h-1zM3 15h1v1h-1z"/><path fill="#0087ff" d="M5 5h1v1h-1zM7 8h1v1h-1zM7 10h1v1h-1zM14 13h1v1h-1z"/><path fill="#0078ff" d="M8 5h1v1h-1z"/><path fill="#8fff70" d="M2 6h1v1h-1zM1 9h1v1h-1zM6 13h1v1h-1zM0 14h1v1h-1zM9 14h1v1h-1zM2 15h1v1h-1zM5 15h1v1h-1z"/><path fill="#0070ff" d="M14 6h1v1h-1zM6 11h1v1h-1z"/><path fill="#00afff" d="M6 7h1v1h-1zM12 9h1v1h-1z"/><path fill="#0068ff" d="M15 7h1v1h-1zM14 10h1v1h-1zM2 13h1v1h-1z"/><path fill="#a7ff58" d="M2 8h1v1h-1zM2 14h1v1h-1z"/><path fill="#c7ff38" d="M8 9h1v1h-1z"/><path fill="#97ff68" d="M0 11h1v1h-1zM0 12h1v1h-1zM10 14h1v1h-1zM7 15h1v1h-1z"/><path fill="#0058ff" d="M3 11h1v1h-1z"/><path fill="#afff50" d="M1 14h1v1h-1z"/><path fill="#b7ff48" d="M5 14h1v1h-1z"/><path fill="#bfff40" d="M6 14h1v1h-1z"/><path fill="#f7ff08" d="M6 15h1v1h-1z"/><path fill="#9fff60" d="M8 15h1v1h-1z"/><path fill="#78ff87" d="M13 15h1v1h-1z"/></g><svg x="0" y="0" width="60" height="80" overflow="hidden"><use href="#ov"/><path fill="#000" d="M0 0h14.5v5h-10.5v5h-4zM53 0h7v10l-2-4l-2-3zM0 75h8v5h-8zM53 75h7v5h-7z"/><use href="#sat" y="0"/></svg></g>
<g transform="translate(4 196)"><g transform="scale(3.75 5)" shape-rendering="crispEdges"><path fill="#df0000" d="M2 0h1v1h-1zM9 0h1v1h-1zM15 1h1v1h-1zM2 2h1v1h-1zM3 2h1v1h-1zM4 2h1v1h-1zM11 2h1v1h-1zM13 2h1v1h-1zM1 3h1v1h-1zM2 3h1v1h-1zM3 3h1v1h-1zM4 3h1v1h-1zM5 3h1v1h-1zM7 3h1v1h-1zM8 3h1v1h-1zM9 3h1v1h-1zM13 3h1v1h-1zM14 3h1v1h-1zM3 4h1v1h-1zM6 4h1v1h-1zM10 4h1v1h-1zM12 4h1v1h-1zM3 5h1v1h-1zM9 5h1v1h-1zM10 5h1v1h-1zM3 6h1v1h-1zM5 6h1v1h-1zM6 6h1v1h-1zM8 6h1v1h-1zM5 7h1v1h-1zM5 8h1v1h-1zM13 8h1v1h-1zM1 9h1v1h-1zM8 9h1v1h-1zM2 10h1v1h-1zM3 10h1v1h-1zM5 10h1v1h-1zM9 10h1v1h-1zM15 10h1v1h-1zM6 11h1v1h-1zM12 11h1v1h-1zM5 12h1v1h-1zM11 12h1v1h-1zM15 12h1v1h-1zM0 13h1v1h-1zM7 13h1v1h-1zM2 14h1v1h-1zM3 14h1v1h-1zM6 14h1v1h-1zM12 14h1v1h-1zM13 14h1v1h-1zM3 15h1v1h-1zM5 15h1v1h-1zM9 15h1v1h-1zM13 15h1v1h-1z"/><path fill="#d70000" d="M3 0h1v1h-1zM8 0h1v1h-1zM2 1h1v1h-1zM4 1h1v1h-1zM13 1h1v1h-1zM0 2h1v1h-1zM5 2h1v1h-1zM9 2h1v1h-1zM0 3h1v1h-1zM11 3h1v1h-1zM4 4h1v1h-1zM7 4h1v1h-1zM8 4h1v1h-1zM9 4h1v1h-1zM7 5h1v1h-1zM12 5h1v1h-1zM1 6h1v1h-1zM10 6h1v1h-1zM11 6h1v1h-1zM15 6h1v1h-1zM3 7h1v1h-1zM14 7h1v1h-1zM0 8h1v1h-1zM2 8h1v1h-1zM4 8h1v1h-1zM6 8h1v1h-1zM7 8h1v1h-1zM8 8h1v1h-1zM11 8h1v1h-1zM14 8h1v1h-1zM3 9h1v1h-1zM4 9h1v1h-1zM10 9h1v1h-1zM13 9h1v1h-1zM14 9h1v1h-1zM12 10h1v1h-1zM13 10h1v1h-1zM5 11h1v1h-1zM9 12h1v1h-1zM12 12h1v1h-1zM1 13h1v1h-1zM8 13h1v1h-1zM11 13h1v1h-1zM12 13h1v1h-1zM9 14h1v1h-1zM15 14h1v1h-1zM6 15h1v1h-1zM7 15h1v1h-1zM8 15h1v1h-1zM11 15h1v1h-1z"/><path fill="#ef0000" d="M4 0h1v1h-1zM0 1h1v1h-1zM11 1h1v1h-1zM15 2h1v1h-1zM0 7h1v1h-1zM10 7h1v1h-1zM15 7h1v1h-1zM3 8h1v1h-1zM11 9h1v1h-1zM7 10h1v1h-1zM10 11h1v1h-1zM2 12h1v1h-1zM10 12h1v1h-1zM0 14h1v1h-1zM4 14h1v1h-1zM12 15h1v1h-1zM14 15h1v1h-1z"/><path fill="#e70000" d="M5 0h1v1h-1zM12 0h1v1h-1zM3 1h1v1h-1zM6 2h1v1h-1zM10 3h1v1h-1zM1 5h1v1h-1zM2 5h1v1h-1zM6 5h1v1h-1zM8 5h1v1h-1zM14 5h1v1h-1zM4 6h1v1h-1zM13 6h1v1h-1zM8 7h1v1h-1zM11 7h1v1h-1zM13 7h1v1h-1zM1 8h1v1h-1zM9 8h1v1h-1zM12 8h1v1h-1zM0 9h1v1h-1zM2 9h1v1h-1zM5 9h1v1h-1zM6 9h1v1h-1zM12 9h1v1h-1zM14 10h1v1h-1zM1 11h1v1h-1zM3 11h1v1h-1zM4 11h1v1h-1zM7 11h1v1h-1zM8 11h1v1h-1zM13 11h1v1h-1zM0 12h1v1h-1zM3 12h1v1h-1zM6 12h1v1h-1zM3 13h1v1h-1zM10 13h1v1h-1zM14 13h1v1h-1zM15 13h1v1h-1zM11 14h1v1h-1zM14 14h1v1h-1zM4 15h1v1h-1z"/><path fill="#cf0000" d="M6 0h1v1h-1zM7 0h1v1h-1zM13 0h1v1h-1zM14 0h1v1h-1zM5 1h1v1h-1zM8 1h1v1h-1zM10 1h1v1h-1zM1 2h1v1h-1zM7 2h1v1h-1zM8 2h1v1h-1zM14 2h1v1h-1zM12 3h1v1h-1zM0 4h1v1h-1zM1 4h1v1h-1zM11 4h1v1h-1zM13 4h1v1h-1zM15 4h1v1h-1zM0 5h1v1h-1zM4 5h1v1h-1zM11 5h1v1h-1zM15 5h1v1h-1zM0 6h1v1h-1zM2 6h1v1h-1zM12 6h1v1h-1zM14 6h1v1h-1zM1 7h1v1h-1zM2 7h1v1h-1zM6 7h1v1h-1zM7 7h1v1h-1zM12 7h1v1h-1zM7 9h1v1h-1zM9 9h1v1h-1zM15 9h1v1h-1zM0 10h1v1h-1zM1 10h1v1h-1zM4 10h1v1h-1zM6 10h1v1h-1zM8 10h1v1h-1zM11 10h1v1h-1zM9 11h1v1h-1zM14 11h1v1h-1zM15 11h1v1h-1zM1 12h1v1h-1zM7 12h1v1h-1zM8 12h1v1h-1zM13 12h1v1h-1zM6 13h1v1h-1zM9 13h1v1h-1zM13 13h1v1h-1zM5 14h1v1h-1zM8 14h1v1h-1zM10 14h1v1h-1zM10 15h1v1h-1z"/><path fill="#c70000" d="M10 0h1v1h-1zM1 1h1v1h-1zM7 1h1v1h-1zM12 1h1v1h-1zM12 2h1v1h-1zM15 3h1v1h-1zM2 4h1v1h-1zM5 4h1v1h-1zM14 4h1v1h-1zM5 5h1v1h-1zM13 5h1v1h-1zM9 6h1v1h-1zM4 7h1v1h-1zM9 7h1v1h-1zM0 11h1v1h-1zM4 12h1v1h-1zM2 13h1v1h-1zM4 13h1v1h-1zM7 14h1v1h-1z"/><path fill="#f70000" d="M11 0h1v1h-1zM9 1h1v1h-1zM6 3h1v1h-1zM15 8h1v1h-1zM10 10h1v1h-1z"/><path fill="#ff0000" d="M6 1h1v1h-1zM10 8h1v1h-1zM5 13h1v1h-1z"/><path fill="#bf0000" d="M14 1h1v1h-1zM10 2h1v1h-1zM11 11h1v1h-1zM14 12h1v1h-1z"/><path fill="#af0000" d="M7 6h1v1h-1z"/><path fill="#ff0800" d="M2 11h1v1h-1zM2 15h1v1h-1z"/><path fill="#b70000" d="M1 14h1v1h-1z"/></g><svg x="0" y="0" width="60" height="80" overflow="hidden"><use href="#ov"/><path fill="#000" d="M0 0h10v5h-7v2h-3zM52.5 0h7.5v9zM0 73h3v2h7v5h-10zM54 75h3v-2h3v7h-6z"/><use href="#sat" y="0"/></svg></g>
<g transform="translate(64 196)"><g transform="scale(3.75 5)" shape-rendering="crispEdges"><path fill="#cf0000" d="M2 0h1v1h-1zM6 0h1v1h-1zM13 0h1v1h-1zM4 1h1v1h-1zM5 1h1v1h-1zM10 1h1v1h-1zM0 2h1v1h-1zM2 2h1v1h-1zM7 2h1v1h-1zM8 2h1v1h-1zM13 2h1v1h-1zM3 3h1v1h-1zM8 3h1v1h-1zM10 3h1v1h-1zM11 3h1v1h-1zM1 4h1v1h-1zM2 4h1v1h-1zM6 4h1v1h-1zM15 4h1v1h-1zM1 5h1v1h-1zM10 5h1v1h-1zM13 5h1v1h-1zM5 6h1v1h-1zM14 6h1v1h-1zM15 6h1v1h-1zM13 7h1v1h-1zM12 8h1v1h-1zM13 8h1v1h-1zM14 8h1v1h-1zM3 9h1v1h-1zM12 9h1v1h-1zM13 9h1v1h-1zM0 10h1v1h-1zM1 10h1v1h-1zM5 10h1v1h-1zM10 10h1v1h-1zM14 10h1v1h-1zM0 11h1v1h-1zM1 11h1v1h-1zM6 11h1v1h-1zM0 12h1v1h-1zM4 12h1v1h-1zM11 12h1v1h-1zM13 12h1v1h-1zM2 13h1v1h-1zM5 13h1v1h-1zM4 14h1v1h-1zM11 14h1v1h-1zM15 14h1v1h-1zM4 15h1v1h-1zM5 15h1v1h-1zM7 15h1v1h-1z"/><path fill="#df0000" d="M3 0h1v1h-1zM5 0h1v1h-1zM10 0h1v1h-1zM12 0h1v1h-1zM1 1h1v1h-1zM2 1h1v1h-1zM7 1h1v1h-1zM8 1h1v1h-1zM11 1h1v1h-1zM0 3h1v1h-1zM13 3h1v1h-1zM8 4h1v1h-1zM5 5h1v1h-1zM12 5h1v1h-1zM0 6h1v1h-1zM2 6h1v1h-1zM12 6h1v1h-1zM7 7h1v1h-1zM9 7h1v1h-1zM15 7h1v1h-1zM0 8h1v1h-1zM5 8h1v1h-1zM7 9h1v1h-1zM3 10h1v1h-1zM13 10h1v1h-1zM8 11h1v1h-1zM9 11h1v1h-1zM12 11h1v1h-1zM4 13h1v1h-1zM12 13h1v1h-1zM2 14h1v1h-1z"/><path fill="#d70000" d="M4 0h1v1h-1zM11 0h1v1h-1zM3 2h1v1h-1zM4 2h1v1h-1zM10 2h1v1h-1zM14 2h1v1h-1zM15 2h1v1h-1zM1 3h1v1h-1zM2 3h1v1h-1zM6 3h1v1h-1zM12 3h1v1h-1zM3 4h1v1h-1zM7 4h1v1h-1zM14 4h1v1h-1zM0 5h1v1h-1zM2 5h1v1h-1zM3 5h1v1h-1zM6 5h1v1h-1zM8 5h1v1h-1zM9 5h1v1h-1zM11 5h1v1h-1zM14 5h1v1h-1zM3 6h1v1h-1zM4 6h1v1h-1zM8 6h1v1h-1zM0 7h1v1h-1zM4 7h1v1h-1zM14 7h1v1h-1zM2 8h1v1h-1zM3 8h1v1h-1zM6 8h1v1h-1zM7 8h1v1h-1zM10 8h1v1h-1zM0 9h1v1h-1zM4 9h1v1h-1zM5 9h1v1h-1zM8 9h1v1h-1zM9 9h1v1h-1zM11 10h1v1h-1zM12 10h1v1h-1zM3 11h1v1h-1zM5 11h1v1h-1zM15 11h1v1h-1zM1 12h1v1h-1zM2 12h1v1h-1zM7 12h1v1h-1zM8 12h1v1h-1zM9 12h1v1h-1zM12 12h1v1h-1zM14 12h1v1h-1zM0 13h1v1h-1zM7 13h1v1h-1zM8 13h1v1h-1zM15 13h1v1h-1zM3 14h1v1h-1zM8 14h1v1h-1zM14 14h1v1h-1zM2 15h1v1h-1zM11 15h1v1h-1z"/><path fill="#c70000" d="M7 0h1v1h-1zM3 1h1v1h-1zM1 2h1v1h-1zM9 2h1v1h-1zM11 2h1v1h-1zM12 2h1v1h-1zM7 3h1v1h-1zM9 3h1v1h-1zM14 3h1v1h-1zM0 4h1v1h-1zM5 4h1v1h-1zM12 4h1v1h-1zM7 5h1v1h-1zM1 6h1v1h-1zM6 6h1v1h-1zM10 6h1v1h-1zM11 6h1v1h-1zM13 6h1v1h-1zM1 7h1v1h-1zM5 7h1v1h-1zM10 7h1v1h-1zM11 7h1v1h-1zM1 8h1v1h-1zM4 8h1v1h-1zM15 8h1v1h-1zM1 9h1v1h-1zM2 9h1v1h-1zM6 9h1v1h-1zM11 9h1v1h-1zM14 9h1v1h-1zM2 10h1v1h-1zM4 10h1v1h-1zM8 10h1v1h-1zM2 11h1v1h-1zM11 11h1v1h-1zM13 11h1v1h-1zM14 11h1v1h-1zM10 12h1v1h-1zM15 12h1v1h-1zM3 13h1v1h-1zM6 13h1v1h-1zM10 13h1v1h-1zM11 13h1v1h-1zM0 14h1v1h-1zM6 14h1v1h-1zM7 14h1v1h-1zM9 14h1v1h-1zM10 14h1v1h-1zM12 14h1v1h-1zM3 15h1v1h-1zM9 15h1v1h-1zM12 15h1v1h-1zM13 15h1v1h-1z"/><path fill="#b70000" d="M8 0h1v1h-1zM6 1h1v1h-1zM9 1h1v1h-1zM5 2h1v1h-1zM11 4h1v1h-1zM15 5h1v1h-1zM7 6h1v1h-1zM8 8h1v1h-1zM9 10h1v1h-1zM9 13h1v1h-1zM6 15h1v1h-1z"/><path fill="#bf0000" d="M9 0h1v1h-1zM4 3h1v1h-1zM5 3h1v1h-1zM15 3h1v1h-1zM9 4h1v1h-1zM4 5h1v1h-1zM9 6h1v1h-1zM2 7h1v1h-1zM3 7h1v1h-1zM6 7h1v1h-1zM8 7h1v1h-1zM12 7h1v1h-1zM9 8h1v1h-1zM6 10h1v1h-1zM7 10h1v1h-1zM4 11h1v1h-1zM10 11h1v1h-1zM5 12h1v1h-1zM6 12h1v1h-1zM13 13h1v1h-1zM1 14h1v1h-1zM13 14h1v1h-1zM8 15h1v1h-1zM10 15h1v1h-1z"/><path fill="#ef0000" d="M0 1h1v1h-1zM12 1h1v1h-1zM14 1h1v1h-1z"/><path fill="#e70000" d="M13 1h1v1h-1zM6 2h1v1h-1zM4 4h1v1h-1zM10 4h1v1h-1zM11 8h1v1h-1zM10 9h1v1h-1zM15 9h1v1h-1zM15 10h1v1h-1zM7 11h1v1h-1zM3 12h1v1h-1zM1 13h1v1h-1zM14 13h1v1h-1zM5 14h1v1h-1z"/><path fill="#af0000" d="M13 4h1v1h-1z"/></g><svg x="0" y="0" width="60" height="80" overflow="hidden"><use href="#ov"/><path fill="#000" d="M0 0h11v5h-7v3h-4zM47 0h13v14zM0 73h3v2h7v5h-10zM50 75h6v-3h4v8h-10z"/><use href="#sat" y="0"/></svg></g>
<g transform="translate(124 196)"><g transform="scale(3.75 5)" shape-rendering="crispEdges"><path fill="#48ffb7" d="M2 0h1v1h-1zM3 0h1v1h-1z"/><path fill="#10ffef" d="M4 0h1v1h-1zM12 2h1v1h-1z"/><path fill="#a7ff58" d="M5 0h1v1h-1zM6 0h1v1h-1zM11 2h1v1h-1zM1 4h1v1h-1zM11 4h1v1h-1zM13 4h1v1h-1zM7 5h1v1h-1zM9 6h1v1h-1zM3 14h1v1h-1z"/><path fill="#78ff87" d="M7 0h1v1h-1zM15 1h1v1h-1zM0 3h1v1h-1zM2 3h1v1h-1zM0 9h1v1h-1z"/><path fill="#afff50" d="M8 0h1v1h-1zM13 1h1v1h-1zM3 2h1v1h-1zM6 3h1v1h-1zM14 4h1v1h-1zM5 5h1v1h-1zM1 9h1v1h-1zM2 9h1v1h-1zM5 12h1v1h-1z"/><path fill="#8fff70" d="M9 0h1v1h-1zM5 1h1v1h-1zM14 1h1v1h-1zM5 2h1v1h-1zM14 3h1v1h-1z"/><path fill="#97ff68" d="M10 0h1v1h-1zM3 1h1v1h-1zM8 2h1v1h-1zM3 3h1v1h-1zM13 7h1v1h-1z"/><path fill="#bfff40" d="M11 0h1v1h-1zM1 2h1v1h-1zM9 3h1v1h-1zM2 5h1v1h-1zM6 6h1v1h-1zM9 7h1v1h-1zM0 8h1v1h-1zM8 8h1v1h-1zM13 8h1v1h-1z"/><path fill="#87ff78" d="M12 0h1v1h-1zM4 1h1v1h-1zM11 1h1v1h-1zM12 1h1v1h-1zM5 3h1v1h-1z"/><path fill="#cfff30" d="M13 0h1v1h-1zM4 3h1v1h-1zM13 3h1v1h-1zM0 5h1v1h-1zM4 8h1v1h-1zM1 10h1v1h-1zM12 10h1v1h-1zM1 11h1v1h-1zM0 14h1v1h-1zM11 14h1v1h-1z"/><path fill="#50ffaf" d="M1 1h1v1h-1zM14 6h1v1h-1zM7 7h1v1h-1z"/><path fill="#60ff9f" d="M2 1h1v1h-1z"/><path fill="#00bfff" d="M6 1h1v1h-1z"/><path fill="#40ffbf" d="M8 1h1v1h-1zM6 4h1v1h-1z"/><path fill="#e7ff18" d="M9 1h1v1h-1zM0 4h1v1h-1zM8 5h1v1h-1zM10 6h1v1h-1zM3 7h1v1h-1zM12 8h1v1h-1zM12 9h1v1h-1zM11 10h1v1h-1zM5 11h1v1h-1zM13 11h1v1h-1zM7 12h1v1h-1zM10 12h1v1h-1z"/><path fill="#b7ff48" d="M10 1h1v1h-1zM12 3h1v1h-1zM15 3h1v1h-1zM4 4h1v1h-1zM3 5h1v1h-1zM6 5h1v1h-1zM15 5h1v1h-1zM11 6h1v1h-1zM10 7h1v1h-1zM11 7h1v1h-1z"/><path fill="#9fff60" d="M2 2h1v1h-1zM15 2h1v1h-1zM2 4h1v1h-1zM8 7h1v1h-1z"/><path fill="#f7ff08" d="M4 2h1v1h-1zM4 6h1v1h-1zM8 6h1v1h-1zM2 7h1v1h-1zM5 8h1v1h-1zM11 8h1v1h-1zM4 10h1v1h-1zM3 12h1v1h-1zM9 13h1v1h-1z"/><path fill="#dfff20" d="M6 2h1v1h-1zM10 2h1v1h-1zM10 3h1v1h-1zM11 3h1v1h-1zM7 4h1v1h-1zM9 4h1v1h-1zM1 7h1v1h-1zM4 7h1v1h-1zM15 8h1v1h-1zM10 9h1v1h-1zM11 9h1v1h-1zM2 10h1v1h-1zM5 10h1v1h-1zM8 10h1v1h-1zM7 11h1v1h-1zM8 11h1v1h-1z"/><path fill="#20ffdf" d="M7 2h1v1h-1zM9 5h1v1h-1z"/><path fill="#80ff80" d="M9 2h1v1h-1zM8 3h1v1h-1zM4 5h1v1h-1zM2 6h1v1h-1zM6 7h1v1h-1z"/><path fill="#fff700" d="M13 2h1v1h-1zM10 5h1v1h-1zM6 9h1v1h-1zM4 11h1v1h-1zM9 11h1v1h-1zM10 11h1v1h-1zM11 11h1v1h-1zM4 12h1v1h-1zM9 14h1v1h-1zM6 15h1v1h-1z"/><path fill="#30ffcf" d="M14 2h1v1h-1z"/><path fill="#c7ff38" d="M1 3h1v1h-1zM7 3h1v1h-1zM3 4h1v1h-1zM8 4h1v1h-1zM12 5h1v1h-1zM0 6h1v1h-1zM1 6h1v1h-1zM0 7h1v1h-1zM1 8h1v1h-1zM2 11h1v1h-1z"/><path fill="#28ffd7" d="M5 4h1v1h-1z"/><path fill="#efff10" d="M10 4h1v1h-1zM12 6h1v1h-1zM9 8h1v1h-1zM10 8h1v1h-1zM13 9h1v1h-1zM14 9h1v1h-1zM3 11h1v1h-1zM8 12h1v1h-1zM9 12h1v1h-1zM1 13h1v1h-1z"/><path fill="#ffe700" d="M12 4h1v1h-1zM13 5h1v1h-1zM5 6h1v1h-1zM5 7h1v1h-1zM4 9h1v1h-1zM15 9h1v1h-1zM0 10h1v1h-1zM14 10h1v1h-1zM6 13h1v1h-1z"/><path fill="#ffef00" d="M15 4h1v1h-1zM2 8h1v1h-1zM7 9h1v1h-1zM7 10h1v1h-1zM6 11h1v1h-1zM12 11h1v1h-1zM14 11h1v1h-1zM1 12h1v1h-1zM6 12h1v1h-1zM4 13h1v1h-1zM10 13h1v1h-1zM8 14h1v1h-1zM10 14h1v1h-1zM14 14h1v1h-1zM9 15h1v1h-1z"/><path fill="#d7ff28" d="M1 5h1v1h-1zM7 6h1v1h-1zM14 7h1v1h-1zM8 9h1v1h-1zM13 10h1v1h-1zM5 13h1v1h-1zM14 13h1v1h-1z"/><path fill="#ffff00" d="M11 5h1v1h-1zM14 5h1v1h-1zM13 6h1v1h-1zM15 6h1v1h-1zM12 7h1v1h-1zM3 8h1v1h-1zM7 8h1v1h-1zM9 9h1v1h-1zM0 11h1v1h-1zM15 11h1v1h-1zM2 13h1v1h-1zM15 13h1v1h-1zM11 15h1v1h-1z"/><path fill="#58ffa7" d="M3 6h1v1h-1z"/><path fill="#ffcf00" d="M15 7h1v1h-1zM13 12h1v1h-1zM15 12h1v1h-1zM0 13h1v1h-1zM12 14h1v1h-1zM15 14h1v1h-1zM2 15h1v1h-1zM3 15h1v1h-1zM4 15h1v1h-1zM12 15h1v1h-1z"/><path fill="#68ff97" d="M6 8h1v1h-1zM9 10h1v1h-1z"/><path fill="#ffd700" d="M14 8h1v1h-1zM3 9h1v1h-1zM10 10h1v1h-1zM2 12h1v1h-1zM8 13h1v1h-1z"/><path fill="#70ff8f" d="M5 9h1v1h-1z"/><path fill="#ffbf00" d="M3 10h1v1h-1zM7 13h1v1h-1zM11 13h1v1h-1zM12 13h1v1h-1zM8 15h1v1h-1zM13 15h1v1h-1z"/><path fill="#ffc700" d="M6 10h1v1h-1zM3 13h1v1h-1zM1 14h1v1h-1zM6 14h1v1h-1z"/><path fill="#ffdf00" d="M15 10h1v1h-1zM0 12h1v1h-1zM7 15h1v1h-1z"/><path fill="#ff9f00" d="M11 12h1v1h-1zM2 14h1v1h-1z"/><path fill="#ffb700" d="M12 12h1v1h-1zM14 12h1v1h-1zM7 14h1v1h-1z"/><path fill="#ffa700" d="M13 13h1v1h-1zM5 14h1v1h-1zM10 15h1v1h-1z"/><path fill="#ff9700" d="M4 14h1v1h-1z"/><path fill="#ff8f00" d="M13 14h1v1h-1z"/><path fill="#ffaf00" d="M5 15h1v1h-1z"/></g><svg x="0" y="0" width="60" height="80" overflow="hidden"><use href="#ov"/><path fill="#000" d="M0 0h14.5v5h-10.5v5h-4zM53 0h7v10l-2-4l-2-3zM0 75h8v5h-8zM53 75h7v5h-7z"/><use href="#sat" y="0"/></svg></g>
<g transform="translate(4 276)"><g transform="scale(3.75 5)" shape-rendering="crispEdges"><path fill="#e70000" d="M2 0h1v1h-1zM7 0h1v1h-1zM3 1h1v1h-1zM11 1h1v1h-1zM2 2h1v1h-1zM0 3h1v1h-1zM10 3h1v1h-1zM12 3h1v1h-1zM2 4h1v1h-1zM8 4h1v1h-1zM14 4h1v1h-1zM7 5h1v1h-1zM4 7h1v1h-1zM5 7h1v1h-1zM9 7h1v1h-1zM0 8h1v1h-1zM0 9h1v1h-1zM6 9h1v1h-1zM12 9h1v1h-1zM1 10h1v1h-1zM5 10h1v1h-1zM7 10h1v1h-1zM15 10h1v1h-1zM3 11h1v1h-1zM6 11h1v1h-1zM11 12h1v1h-1zM2 13h1v1h-1zM5 14h1v1h-1zM5 15h1v1h-1zM7 15h1v1h-1z"/><path fill="#d70000" d="M3 0h1v1h-1zM0 1h1v1h-1zM1 1h1v1h-1zM4 1h1v1h-1zM8 1h1v1h-1zM13 1h1v1h-1zM14 1h1v1h-1zM5 2h1v1h-1zM10 2h1v1h-1zM12 2h1v1h-1zM14 2h1v1h-1zM1 3h1v1h-1zM2 3h1v1h-1zM6 3h1v1h-1zM8 3h1v1h-1zM13 3h1v1h-1zM14 3h1v1h-1zM3 4h1v1h-1zM12 4h1v1h-1zM13 4h1v1h-1zM0 5h1v1h-1zM9 5h1v1h-1zM12 5h1v1h-1zM15 5h1v1h-1zM0 6h1v1h-1zM5 6h1v1h-1zM8 6h1v1h-1zM9 6h1v1h-1zM13 6h1v1h-1zM14 6h1v1h-1zM0 7h1v1h-1zM2 7h1v1h-1zM3 7h1v1h-1zM10 7h1v1h-1zM11 7h1v1h-1zM14 7h1v1h-1zM7 8h1v1h-1zM9 8h1v1h-1zM12 8h1v1h-1zM14 8h1v1h-1zM1 9h1v1h-1zM5 9h1v1h-1zM15 9h1v1h-1zM2 10h1v1h-1zM3 10h1v1h-1zM6 10h1v1h-1zM14 10h1v1h-1zM2 11h1v1h-1zM9 11h1v1h-1zM15 11h1v1h-1zM0 12h1v1h-1zM2 12h1v1h-1zM7 12h1v1h-1zM14 12h1v1h-1zM1 13h1v1h-1zM6 13h1v1h-1zM13 13h1v1h-1zM15 13h1v1h-1zM0 14h1v1h-1zM12 14h1v1h-1zM13 14h1v1h-1zM15 14h1v1h-1zM8 15h1v1h-1zM13 15h1v1h-1z"/><path fill="#df0000" d="M4 0h1v1h-1zM8 0h1v1h-1zM12 0h1v1h-1zM14 0h1v1h-1zM6 1h1v1h-1zM15 1h1v1h-1zM0 2h1v1h-1zM1 2h1v1h-1zM7 2h1v1h-1zM13 2h1v1h-1zM15 2h1v1h-1zM3 3h1v1h-1zM4 3h1v1h-1zM5 3h1v1h-1zM1 4h1v1h-1zM5 4h1v1h-1zM1 5h1v1h-1zM8 5h1v1h-1zM13 5h1v1h-1zM1 6h1v1h-1zM2 6h1v1h-1zM3 6h1v1h-1zM4 6h1v1h-1zM6 6h1v1h-1zM15 6h1v1h-1zM12 7h1v1h-1zM15 7h1v1h-1zM3 8h1v1h-1zM4 8h1v1h-1zM10 8h1v1h-1zM15 8h1v1h-1zM3 9h1v1h-1zM9 9h1v1h-1zM0 10h1v1h-1zM4 10h1v1h-1zM11 11h1v1h-1zM12 11h1v1h-1zM5 12h1v1h-1zM6 12h1v1h-1zM13 12h1v1h-1zM0 13h1v1h-1zM4 13h1v1h-1zM5 13h1v1h-1zM7 13h1v1h-1zM9 13h1v1h-1zM12 13h1v1h-1zM14 13h1v1h-1zM2 14h1v1h-1zM3 15h1v1h-1zM6 15h1v1h-1zM11 15h1v1h-1z"/><path fill="#f70000" d="M5 0h1v1h-1zM8 2h1v1h-1zM10 5h1v1h-1z"/><path fill="#c70000" d="M6 0h1v1h-1zM11 0h1v1h-1zM5 1h1v1h-1zM10 1h1v1h-1zM11 2h1v1h-1zM7 3h1v1h-1zM0 4h1v1h-1zM10 4h1v1h-1zM15 4h1v1h-1zM11 6h1v1h-1zM7 7h1v1h-1zM11 8h1v1h-1zM2 9h1v1h-1zM4 9h1v1h-1zM0 11h1v1h-1zM4 11h1v1h-1zM13 11h1v1h-1zM10 12h1v1h-1zM8 13h1v1h-1zM3 14h1v1h-1zM10 14h1v1h-1zM2 15h1v1h-1z"/><path fill="#cf0000" d="M9 0h1v1h-1zM13 0h1v1h-1zM7 1h1v1h-1zM9 1h1v1h-1zM12 1h1v1h-1zM6 2h1v1h-1zM11 3h1v1h-1zM15 3h1v1h-1zM4 4h1v1h-1zM6 4h1v1h-1zM9 4h1v1h-1zM2 5h1v1h-1zM3 5h1v1h-1zM4 5h1v1h-1zM5 5h1v1h-1zM6 5h1v1h-1zM7 6h1v1h-1zM10 6h1v1h-1zM12 6h1v1h-1zM1 7h1v1h-1zM6 7h1v1h-1zM8 7h1v1h-1zM13 7h1v1h-1zM1 8h1v1h-1zM2 8h1v1h-1zM5 8h1v1h-1zM6 8h1v1h-1zM13 8h1v1h-1zM7 9h1v1h-1zM8 9h1v1h-1zM11 9h1v1h-1zM13 9h1v1h-1zM8 10h1v1h-1zM9 10h1v1h-1zM11 10h1v1h-1zM12 10h1v1h-1zM13 10h1v1h-1zM1 11h1v1h-1zM5 11h1v1h-1zM7 11h1v1h-1zM10 11h1v1h-1zM1 12h1v1h-1zM3 12h1v1h-1zM4 12h1v1h-1zM8 12h1v1h-1zM9 12h1v1h-1zM12 12h1v1h-1zM15 12h1v1h-1zM3 13h1v1h-1zM10 13h1v1h-1zM11 13h1v1h-1zM4 14h1v1h-1zM7 14h1v1h-1zM9 14h1v1h-1zM11 14h1v1h-1zM14 14h1v1h-1zM4 15h1v1h-1zM9 15h1v1h-1zM10 15h1v1h-1zM12 15h1v1h-1zM14 15h1v1h-1z"/><path fill="#ef0000" d="M10 0h1v1h-1zM2 1h1v1h-1zM9 2h1v1h-1zM11 4h1v1h-1zM14 5h1v1h-1zM10 9h1v1h-1zM14 9h1v1h-1zM6 14h1v1h-1zM8 14h1v1h-1z"/><path fill="#b70000" d="M3 2h1v1h-1z"/><path fill="#bf0000" d="M4 2h1v1h-1zM9 3h1v1h-1zM7 4h1v1h-1zM11 5h1v1h-1zM8 8h1v1h-1zM10 10h1v1h-1zM8 11h1v1h-1zM1 14h1v1h-1z"/><path fill="#af0000" d="M14 11h1v1h-1z"/></g><svg x="0" y="0" width="60" height="80" overflow="hidden"><use href="#ov"/><path fill="#000" d="M0 0h10v5h-7v2h-3zM52.5 0h7.5v9zM0 73h3v2h7v5h-10zM54 75h3v-2h3v7h-6z"/><use href="#sat" y="0"/></svg></g>
<g transform="translate(64 276)"><g transform="scale(3.75 5)" shape-rendering="crispEdges"><path fill="#df0000" d="M2 0h1v1h-1zM7 2h1v1h-1zM13 3h1v1h-1zM14 3h1v1h-1zM12 4h1v1h-1zM4 6h1v1h-1zM6 7h1v1h-1zM8 7h1v1h-1zM6 8h1v1h-1zM2 10h1v1h-1zM11 10h1v1h-1zM15 10h1v1h-1zM13 11h1v1h-1zM1 12h1v1h-1zM3 13h1v1h-1zM4 13h1v1h-1zM7 13h1v1h-1zM13 13h1v1h-1zM1 14h1v1h-1zM5 15h1v1h-1z"/><path fill="#bf0000" d="M3 0h1v1h-1zM2 1h1v1h-1zM6 1h1v1h-1zM11 1h1v1h-1zM13 1h1v1h-1zM14 1h1v1h-1zM8 2h1v1h-1zM11 2h1v1h-1zM3 4h1v1h-1zM6 4h1v1h-1zM0 5h1v1h-1zM2 5h1v1h-1zM3 5h1v1h-1zM4 5h1v1h-1zM5 5h1v1h-1zM7 5h1v1h-1zM10 5h1v1h-1zM14 5h1v1h-1zM6 6h1v1h-1zM7 6h1v1h-1zM9 6h1v1h-1zM13 6h1v1h-1zM14 7h1v1h-1zM11 8h1v1h-1zM6 9h1v1h-1zM13 10h1v1h-1zM14 10h1v1h-1zM0 11h1v1h-1zM1 11h1v1h-1zM8 11h1v1h-1zM10 11h1v1h-1zM12 11h1v1h-1zM0 12h1v1h-1zM4 12h1v1h-1zM5 13h1v1h-1zM15 13h1v1h-1zM0 14h1v1h-1zM2 14h1v1h-1zM6 15h1v1h-1zM7 15h1v1h-1zM11 15h1v1h-1zM12 15h1v1h-1z"/><path fill="#cf0000" d="M4 0h1v1h-1zM6 0h1v1h-1zM7 0h1v1h-1zM12 0h1v1h-1zM0 1h1v1h-1zM1 1h1v1h-1zM3 1h1v1h-1zM5 1h1v1h-1zM8 1h1v1h-1zM0 2h1v1h-1zM2 2h1v1h-1zM3 2h1v1h-1zM5 2h1v1h-1zM9 2h1v1h-1zM10 2h1v1h-1zM12 2h1v1h-1zM15 2h1v1h-1zM6 3h1v1h-1zM11 3h1v1h-1zM0 4h1v1h-1zM1 4h1v1h-1zM2 4h1v1h-1zM4 4h1v1h-1zM8 4h1v1h-1zM10 4h1v1h-1zM11 4h1v1h-1zM13 4h1v1h-1zM6 5h1v1h-1zM8 5h1v1h-1zM9 5h1v1h-1zM3 6h1v1h-1zM5 6h1v1h-1zM11 6h1v1h-1zM3 7h1v1h-1zM1 8h1v1h-1zM3 8h1v1h-1zM5 8h1v1h-1zM8 8h1v1h-1zM9 8h1v1h-1zM10 8h1v1h-1zM13 8h1v1h-1zM5 9h1v1h-1zM7 9h1v1h-1zM8 9h1v1h-1zM10 9h1v1h-1zM12 9h1v1h-1zM13 9h1v1h-1zM14 9h1v1h-1zM5 10h1v1h-1zM10 10h1v1h-1zM2 11h1v1h-1zM5 11h1v1h-1zM6 11h1v1h-1zM7 11h1v1h-1zM15 11h1v1h-1zM5 12h1v1h-1zM7 12h1v1h-1zM9 12h1v1h-1zM10 12h1v1h-1zM10 13h1v1h-1zM3 14h1v1h-1zM5 14h1v1h-1zM10 14h1v1h-1zM15 14h1v1h-1zM2 15h1v1h-1zM13 15h1v1h-1z"/><path fill="#af0000" d="M5 0h1v1h-1zM7 3h1v1h-1zM11 5h1v1h-1zM1 7h1v1h-1zM4 7h1v1h-1zM3 10h1v1h-1z"/><path fill="#b70000" d="M8 0h1v1h-1zM10 0h1v1h-1zM15 3h1v1h-1zM5 4h1v1h-1zM7 4h1v1h-1zM13 5h1v1h-1zM11 7h1v1h-1zM11 9h1v1h-1zM4 10h1v1h-1zM4 11h1v1h-1zM8 12h1v1h-1zM11 12h1v1h-1zM8 13h1v1h-1zM13 14h1v1h-1zM8 15h1v1h-1z"/><path fill="#c70000" d="M9 0h1v1h-1zM11 0h1v1h-1zM13 0h1v1h-1zM4 1h1v1h-1zM9 1h1v1h-1zM12 1h1v1h-1zM4 2h1v1h-1zM14 2h1v1h-1zM1 3h1v1h-1zM4 3h1v1h-1zM5 3h1v1h-1zM8 3h1v1h-1zM10 3h1v1h-1zM9 4h1v1h-1zM1 5h1v1h-1zM0 6h1v1h-1zM1 6h1v1h-1zM2 6h1v1h-1zM8 6h1v1h-1zM12 6h1v1h-1zM14 6h1v1h-1zM15 6h1v1h-1zM0 7h1v1h-1zM5 7h1v1h-1zM7 7h1v1h-1zM10 7h1v1h-1zM12 7h1v1h-1zM13 7h1v1h-1zM15 7h1v1h-1zM2 8h1v1h-1zM12 8h1v1h-1zM0 9h1v1h-1zM2 9h1v1h-1zM4 9h1v1h-1zM9 9h1v1h-1zM15 9h1v1h-1zM0 10h1v1h-1zM1 10h1v1h-1zM7 10h1v1h-1zM8 10h1v1h-1zM12 10h1v1h-1zM3 11h1v1h-1zM2 12h1v1h-1zM6 12h1v1h-1zM12 12h1v1h-1zM13 12h1v1h-1zM15 12h1v1h-1zM1 13h1v1h-1zM6 13h1v1h-1zM11 13h1v1h-1zM4 14h1v1h-1zM6 14h1v1h-1zM11 14h1v1h-1zM9 15h1v1h-1zM10 15h1v1h-1z"/><path fill="#ef0000" d="M7 1h1v1h-1z"/><path fill="#d70000" d="M10 1h1v1h-1zM1 2h1v1h-1zM13 2h1v1h-1zM2 3h1v1h-1zM3 3h1v1h-1zM9 3h1v1h-1zM14 4h1v1h-1zM15 4h1v1h-1zM12 5h1v1h-1zM15 5h1v1h-1zM10 6h1v1h-1zM9 7h1v1h-1zM0 8h1v1h-1zM4 8h1v1h-1zM7 8h1v1h-1zM14 8h1v1h-1zM15 8h1v1h-1zM1 9h1v1h-1zM3 9h1v1h-1zM6 10h1v1h-1zM11 11h1v1h-1zM14 11h1v1h-1zM3 12h1v1h-1zM14 12h1v1h-1zM2 13h1v1h-1zM9 13h1v1h-1zM12 13h1v1h-1zM14 13h1v1h-1zM7 14h1v1h-1zM8 14h1v1h-1zM9 14h1v1h-1zM12 14h1v1h-1zM14 14h1v1h-1zM3 15h1v1h-1zM4 15h1v1h-1z"/><path fill="#a70000" d="M6 2h1v1h-1z"/><path fill="#e70000" d="M0 3h1v1h-1zM12 3h1v1h-1zM2 7h1v1h-1zM9 10h1v1h-1zM9 11h1v1h-1zM0 13h1v1h-1z"/></g><svg x="0" y="0" width="60" height="80" overflow="hidden"><use href="#ov"/><path fill="#000" d="M0 0h11v5h-7v3h-4zM47 0h13v14zM0 73h3v2h7v5h-10zM50 75h6v-3h4v8h-10z"/><use href="#sat" y="0"/></svg></g>
<g transform="translate(124 276)"><g transform="scale(3.75 5)" shape-rendering="crispEdges"><path fill="#d7ff28" d="M2 0h1v1h-1zM12 0h1v1h-1z"/><path fill="#ffef00" d="M3 0h1v1h-1zM6 0h1v1h-1zM1 1h1v1h-1zM2 1h1v1h-1zM15 1h1v1h-1zM11 2h1v1h-1zM15 2h1v1h-1zM0 3h1v1h-1zM8 3h1v1h-1zM6 4h1v1h-1zM2 7h1v1h-1zM5 9h1v1h-1zM3 11h1v1h-1zM8 12h1v1h-1zM3 13h1v1h-1zM3 14h1v1h-1zM5 15h1v1h-1zM6 15h1v1h-1z"/><path fill="#ffdf00" d="M4 0h1v1h-1zM13 0h1v1h-1zM6 3h1v1h-1zM12 3h1v1h-1zM12 4h1v1h-1zM7 7h1v1h-1zM0 8h1v1h-1zM1 8h1v1h-1zM1 9h1v1h-1zM7 9h1v1h-1zM1 10h1v1h-1zM6 10h1v1h-1zM5 11h1v1h-1zM0 12h1v1h-1zM11 12h1v1h-1z"/><path fill="#efff10" d="M5 0h1v1h-1zM8 1h1v1h-1zM9 1h1v1h-1zM10 1h1v1h-1zM5 3h1v1h-1zM7 4h1v1h-1zM7 6h1v1h-1zM2 10h1v1h-1z"/><path fill="#ffff00" d="M7 0h1v1h-1zM12 1h1v1h-1zM13 1h1v1h-1zM9 4h1v1h-1zM10 4h1v1h-1zM5 7h1v1h-1zM2 8h1v1h-1zM9 11h1v1h-1zM15 13h1v1h-1zM5 14h1v1h-1z"/><path fill="#ffd700" d="M9 0h1v1h-1zM10 0h1v1h-1zM6 1h1v1h-1zM0 5h1v1h-1zM3 5h1v1h-1zM4 7h1v1h-1zM6 8h1v1h-1zM0 11h1v1h-1zM8 11h1v1h-1zM1 14h1v1h-1zM2 14h1v1h-1z"/><path fill="#ffaf00" d="M11 0h1v1h-1zM6 6h1v1h-1zM12 9h1v1h-1zM3 12h1v1h-1zM13 13h1v1h-1zM15 14h1v1h-1z"/><path fill="#dfff20" d="M3 1h1v1h-1zM4 5h1v1h-1z"/><path fill="#c7ff38" d="M4 1h1v1h-1zM0 13h1v1h-1z"/><path fill="#ffcf00" d="M5 1h1v1h-1zM11 1h1v1h-1zM4 6h1v1h-1zM14 6h1v1h-1zM8 7h1v1h-1zM11 7h1v1h-1zM8 8h1v1h-1zM8 9h1v1h-1zM11 9h1v1h-1zM13 9h1v1h-1zM3 10h1v1h-1zM5 12h1v1h-1zM9 13h1v1h-1z"/><path fill="#e7ff18" d="M14 1h1v1h-1zM1 2h1v1h-1zM0 4h1v1h-1zM4 4h1v1h-1zM13 5h1v1h-1zM1 6h1v1h-1zM9 6h1v1h-1z"/><path fill="#ffc700" d="M2 2h1v1h-1zM11 3h1v1h-1zM9 5h1v1h-1zM10 5h1v1h-1zM15 5h1v1h-1zM5 6h1v1h-1zM15 6h1v1h-1zM9 7h1v1h-1zM10 8h1v1h-1zM13 8h1v1h-1zM15 8h1v1h-1zM15 9h1v1h-1zM7 10h1v1h-1zM13 10h1v1h-1zM1 11h1v1h-1zM14 11h1v1h-1zM7 12h1v1h-1zM1 13h1v1h-1zM5 13h1v1h-1zM14 13h1v1h-1zM6 14h1v1h-1zM11 15h1v1h-1z"/><path fill="#ffe700" d="M3 2h1v1h-1zM5 2h1v1h-1zM1 4h1v1h-1zM2 4h1v1h-1zM8 4h1v1h-1zM11 4h1v1h-1zM13 4h1v1h-1zM1 5h1v1h-1zM6 5h1v1h-1zM10 6h1v1h-1zM0 7h1v1h-1zM13 7h1v1h-1zM4 10h1v1h-1zM8 10h1v1h-1zM12 10h1v1h-1zM7 11h1v1h-1zM15 11h1v1h-1zM8 13h1v1h-1zM13 14h1v1h-1z"/><path fill="#cfff30" d="M4 2h1v1h-1zM1 3h1v1h-1zM4 3h1v1h-1zM5 5h1v1h-1z"/><path fill="#fff700" d="M6 2h1v1h-1zM10 2h1v1h-1zM12 2h1v1h-1zM13 2h1v1h-1zM10 3h1v1h-1zM8 5h1v1h-1zM2 6h1v1h-1zM3 7h1v1h-1zM3 8h1v1h-1zM4 8h1v1h-1zM11 8h1v1h-1zM0 9h1v1h-1zM4 9h1v1h-1zM0 10h1v1h-1zM5 10h1v1h-1zM4 15h1v1h-1z"/><path fill="#80ff80" d="M7 2h1v1h-1zM8 2h1v1h-1zM3 3h1v1h-1zM7 3h1v1h-1zM9 3h1v1h-1zM13 3h1v1h-1zM14 3h1v1h-1zM5 4h1v1h-1zM2 5h1v1h-1zM12 5h1v1h-1zM8 6h1v1h-1zM11 6h1v1h-1zM13 6h1v1h-1z"/><path fill="#f7ff08" d="M9 2h1v1h-1zM14 2h1v1h-1zM2 3h1v1h-1zM14 4h1v1h-1zM7 5h1v1h-1zM0 6h1v1h-1zM12 6h1v1h-1zM1 7h1v1h-1zM12 7h1v1h-1zM2 9h1v1h-1zM3 9h1v1h-1zM6 9h1v1h-1zM2 11h1v1h-1zM4 13h1v1h-1z"/><path fill="#ffbf00" d="M15 3h1v1h-1zM14 5h1v1h-1zM15 7h1v1h-1zM5 8h1v1h-1zM14 9h1v1h-1zM9 10h1v1h-1zM10 10h1v1h-1zM11 11h1v1h-1zM13 11h1v1h-1zM1 12h1v1h-1zM2 12h1v1h-1zM6 12h1v1h-1zM6 13h1v1h-1zM7 13h1v1h-1zM10 13h1v1h-1zM7 14h1v1h-1zM10 14h1v1h-1zM14 14h1v1h-1zM3 15h1v1h-1zM7 15h1v1h-1z"/><path fill="#ffb700" d="M3 4h1v1h-1zM3 6h1v1h-1zM6 7h1v1h-1zM10 7h1v1h-1zM14 10h1v1h-1zM10 11h1v1h-1zM4 12h1v1h-1zM10 12h1v1h-1zM12 12h1v1h-1zM13 12h1v1h-1zM0 14h1v1h-1zM4 14h1v1h-1zM8 14h1v1h-1zM11 14h1v1h-1zM2 15h1v1h-1zM8 15h1v1h-1z"/><path fill="#ff9f00" d="M15 4h1v1h-1zM9 8h1v1h-1zM12 8h1v1h-1zM11 10h1v1h-1zM14 12h1v1h-1zM12 14h1v1h-1zM10 15h1v1h-1z"/><path fill="#ffa700" d="M11 5h1v1h-1zM7 8h1v1h-1zM14 8h1v1h-1zM4 11h1v1h-1zM2 13h1v1h-1zM11 13h1v1h-1zM9 15h1v1h-1z"/><path fill="#ff9700" d="M14 7h1v1h-1zM9 9h1v1h-1zM10 9h1v1h-1zM15 10h1v1h-1zM9 12h1v1h-1zM9 14h1v1h-1zM12 15h1v1h-1zM13 15h1v1h-1z"/><path fill="#ff8f00" d="M6 11h1v1h-1zM15 12h1v1h-1z"/><path fill="#ff8700" d="M12 11h1v1h-1z"/><path fill="#ff7800" d="M12 13h1v1h-1z"/></g><svg x="0" y="0" width="60" height="80" overflow="hidden"><use href="#ov"/><path fill="#000" d="M0 0h14.5v5h-10.5v5h-4zM53 0h7v10l-2-4l-2-3zM0 75h8v5h-8zM53 75h7v5h-7z"/><use href="#sat" y="0"/></svg></g>
<g transform="translate(4 356)"><g transform="scale(3.75 5)" shape-rendering="crispEdges"><path fill="#e70000" d="M2 0h1v1h-1zM8 0h1v1h-1zM10 0h1v1h-1zM10 1h1v1h-1zM7 2h1v1h-1zM11 3h1v1h-1zM15 3h1v1h-1zM2 4h1v1h-1zM10 4h1v1h-1zM13 4h1v1h-1zM8 5h1v1h-1zM11 5h1v1h-1zM2 6h1v1h-1zM4 6h1v1h-1zM13 6h1v1h-1zM0 7h1v1h-1zM10 7h1v1h-1zM1 8h1v1h-1zM5 8h1v1h-1zM12 8h1v1h-1zM4 9h1v1h-1zM6 9h1v1h-1zM13 9h1v1h-1zM0 10h1v1h-1zM4 10h1v1h-1zM8 10h1v1h-1zM12 10h1v1h-1zM9 11h1v1h-1zM11 11h1v1h-1zM13 12h1v1h-1zM5 13h1v1h-1zM9 13h1v1h-1zM14 13h1v1h-1zM15 13h1v1h-1zM1 14h1v1h-1zM6 14h1v1h-1zM7 14h1v1h-1zM14 14h1v1h-1zM4 15h1v1h-1zM11 15h1v1h-1zM14 15h1v1h-1z"/><path fill="#ef0000" d="M3 0h1v1h-1zM11 0h1v1h-1zM11 1h1v1h-1zM7 3h1v1h-1zM10 3h1v1h-1zM12 3h1v1h-1zM14 3h1v1h-1zM9 4h1v1h-1zM13 5h1v1h-1zM3 6h1v1h-1zM6 6h1v1h-1zM8 6h1v1h-1zM1 7h1v1h-1zM6 7h1v1h-1zM11 8h1v1h-1zM1 9h1v1h-1zM10 9h1v1h-1zM13 10h1v1h-1zM15 10h1v1h-1zM8 11h1v1h-1zM10 11h1v1h-1zM7 13h1v1h-1z"/><path fill="#df0000" d="M4 0h1v1h-1zM5 0h1v1h-1zM6 0h1v1h-1zM7 0h1v1h-1zM12 0h1v1h-1zM14 0h1v1h-1zM2 1h1v1h-1zM3 1h1v1h-1zM6 1h1v1h-1zM13 1h1v1h-1zM15 1h1v1h-1zM1 2h1v1h-1zM2 2h1v1h-1zM9 2h1v1h-1zM10 2h1v1h-1zM11 2h1v1h-1zM12 2h1v1h-1zM13 2h1v1h-1zM15 2h1v1h-1zM9 3h1v1h-1zM13 3h1v1h-1zM1 4h1v1h-1zM3 4h1v1h-1zM4 4h1v1h-1zM5 4h1v1h-1zM6 4h1v1h-1zM7 4h1v1h-1zM11 4h1v1h-1zM12 4h1v1h-1zM14 4h1v1h-1zM1 5h1v1h-1zM2 5h1v1h-1zM4 5h1v1h-1zM7 5h1v1h-1zM10 5h1v1h-1zM14 5h1v1h-1zM15 5h1v1h-1zM5 6h1v1h-1zM10 6h1v1h-1zM14 6h1v1h-1zM15 6h1v1h-1zM8 7h1v1h-1zM15 7h1v1h-1zM4 8h1v1h-1zM6 8h1v1h-1zM9 8h1v1h-1zM9 9h1v1h-1zM11 9h1v1h-1zM7 10h1v1h-1zM14 10h1v1h-1zM0 11h1v1h-1zM7 11h1v1h-1zM12 11h1v1h-1zM14 11h1v1h-1zM15 11h1v1h-1zM0 12h1v1h-1zM5 12h1v1h-1zM6 12h1v1h-1zM10 12h1v1h-1zM12 12h1v1h-1zM14 12h1v1h-1zM15 12h1v1h-1zM1 13h1v1h-1zM2 13h1v1h-1zM3 13h1v1h-1zM8 13h1v1h-1zM11 13h1v1h-1zM13 13h1v1h-1zM0 14h1v1h-1zM5 14h1v1h-1zM8 14h1v1h-1zM2 15h1v1h-1zM5 15h1v1h-1zM6 15h1v1h-1zM8 15h1v1h-1zM10 15h1v1h-1z"/><path fill="#d70000" d="M9 0h1v1h-1zM4 1h1v1h-1zM8 1h1v1h-1zM12 1h1v1h-1zM0 2h1v1h-1zM4 2h1v1h-1zM8 2h1v1h-1zM0 3h1v1h-1zM2 3h1v1h-1zM0 4h1v1h-1zM15 4h1v1h-1zM3 5h1v1h-1zM6 5h1v1h-1zM9 5h1v1h-1zM0 6h1v1h-1zM1 6h1v1h-1zM7 6h1v1h-1zM7 7h1v1h-1zM11 7h1v1h-1zM13 7h1v1h-1zM8 8h1v1h-1zM14 8h1v1h-1zM0 9h1v1h-1zM8 9h1v1h-1zM2 10h1v1h-1zM3 10h1v1h-1zM6 10h1v1h-1zM10 10h1v1h-1zM1 11h1v1h-1zM3 11h1v1h-1zM4 11h1v1h-1zM5 11h1v1h-1zM13 11h1v1h-1zM1 12h1v1h-1zM3 12h1v1h-1zM8 12h1v1h-1zM9 12h1v1h-1zM4 13h1v1h-1zM10 13h1v1h-1zM12 13h1v1h-1zM2 14h1v1h-1zM3 14h1v1h-1zM9 14h1v1h-1zM11 14h1v1h-1zM12 15h1v1h-1zM13 15h1v1h-1z"/><path fill="#cf0000" d="M13 0h1v1h-1zM0 1h1v1h-1zM7 1h1v1h-1zM5 2h1v1h-1zM6 2h1v1h-1zM3 3h1v1h-1zM4 3h1v1h-1zM5 3h1v1h-1zM8 4h1v1h-1zM0 5h1v1h-1zM3 7h1v1h-1zM4 7h1v1h-1zM9 7h1v1h-1zM12 7h1v1h-1zM14 7h1v1h-1zM7 8h1v1h-1zM2 9h1v1h-1zM3 9h1v1h-1zM5 9h1v1h-1zM7 9h1v1h-1zM15 9h1v1h-1zM11 10h1v1h-1zM6 11h1v1h-1zM2 12h1v1h-1zM11 12h1v1h-1zM0 13h1v1h-1zM6 13h1v1h-1zM4 14h1v1h-1zM15 14h1v1h-1zM3 15h1v1h-1zM9 15h1v1h-1z"/><path fill="#c70000" d="M1 1h1v1h-1zM14 1h1v1h-1zM14 2h1v1h-1zM1 3h1v1h-1zM6 3h1v1h-1zM8 3h1v1h-1zM12 6h1v1h-1zM0 8h1v1h-1zM2 8h1v1h-1zM10 8h1v1h-1zM13 8h1v1h-1zM5 10h1v1h-1zM2 11h1v1h-1zM4 12h1v1h-1zM7 12h1v1h-1zM10 14h1v1h-1zM12 14h1v1h-1zM13 14h1v1h-1zM7 15h1v1h-1z"/><path fill="#b70000" d="M5 1h1v1h-1z"/><path fill="#f70000" d="M9 1h1v1h-1zM5 5h1v1h-1zM12 5h1v1h-1zM9 6h1v1h-1zM11 6h1v1h-1zM2 7h1v1h-1zM15 8h1v1h-1zM12 9h1v1h-1zM14 9h1v1h-1z"/><path fill="#bf0000" d="M3 2h1v1h-1zM5 7h1v1h-1z"/><path fill="#ff0000" d="M3 8h1v1h-1zM1 10h1v1h-1zM9 10h1v1h-1z"/></g><svg x="0" y="0" width="60" height="80" overflow="hidden"><use href="#ov"/><path fill="#000" d="M0 0h10v5h-7v2h-3zM52.5 0h7.5v9zM0 73h3v2h7v5h-10zM54 75h3v-2h3v7h-6z"/><use href="#sat" y="0"/></svg></g>
<g transform="translate(64 356)"><g transform="scale(3.75 5)" shape-rendering="crispEdges"><path fill="#c70000" d="M2 0h1v1h-1zM6 0h1v1h-1zM7 0h1v1h-1zM9 0h1v1h-1zM11 0h1v1h-1zM12 0h1v1h-1zM13 0h1v1h-1zM0 1h1v1h-1zM2 1h1v1h-1zM3 1h1v1h-1zM9 1h1v1h-1zM10 1h1v1h-1zM14 1h1v1h-1zM2 2h1v1h-1zM4 2h1v1h-1zM7 2h1v1h-1zM10 2h1v1h-1zM13 2h1v1h-1zM14 2h1v1h-1zM1 3h1v1h-1zM3 3h1v1h-1zM4 3h1v1h-1zM5 3h1v1h-1zM9 3h1v1h-1zM10 3h1v1h-1zM12 3h1v1h-1zM8 4h1v1h-1zM10 4h1v1h-1zM12 4h1v1h-1zM13 4h1v1h-1zM15 4h1v1h-1zM7 5h1v1h-1zM8 5h1v1h-1zM11 5h1v1h-1zM13 5h1v1h-1zM0 6h1v1h-1zM3 6h1v1h-1zM4 6h1v1h-1zM11 6h1v1h-1zM15 6h1v1h-1zM0 7h1v1h-1zM8 7h1v1h-1zM9 7h1v1h-1zM11 7h1v1h-1zM12 7h1v1h-1zM14 7h1v1h-1zM12 8h1v1h-1zM13 8h1v1h-1zM15 9h1v1h-1zM6 10h1v1h-1zM1 11h1v1h-1zM8 11h1v1h-1zM11 11h1v1h-1zM0 12h1v1h-1zM6 12h1v1h-1zM9 12h1v1h-1zM3 13h1v1h-1zM5 13h1v1h-1zM10 13h1v1h-1zM11 14h1v1h-1zM12 14h1v1h-1zM14 14h1v1h-1zM15 14h1v1h-1zM3 15h1v1h-1zM4 15h1v1h-1zM6 15h1v1h-1zM7 15h1v1h-1zM11 15h1v1h-1z"/><path fill="#cf0000" d="M3 0h1v1h-1zM8 0h1v1h-1zM4 1h1v1h-1zM7 1h1v1h-1zM1 2h1v1h-1zM5 2h1v1h-1zM9 2h1v1h-1zM11 2h1v1h-1zM0 3h1v1h-1zM6 3h1v1h-1zM3 4h1v1h-1zM5 4h1v1h-1zM7 4h1v1h-1zM11 4h1v1h-1zM14 4h1v1h-1zM14 5h1v1h-1zM15 5h1v1h-1zM1 6h1v1h-1zM6 6h1v1h-1zM8 6h1v1h-1zM3 7h1v1h-1zM13 7h1v1h-1zM1 8h1v1h-1zM7 8h1v1h-1zM9 8h1v1h-1zM14 8h1v1h-1zM1 9h1v1h-1zM6 9h1v1h-1zM10 9h1v1h-1zM2 10h1v1h-1zM3 10h1v1h-1zM4 10h1v1h-1zM5 10h1v1h-1zM9 10h1v1h-1zM12 10h1v1h-1zM13 10h1v1h-1zM2 11h1v1h-1zM4 11h1v1h-1zM5 11h1v1h-1zM7 11h1v1h-1zM15 11h1v1h-1zM15 12h1v1h-1zM2 13h1v1h-1zM4 13h1v1h-1zM6 13h1v1h-1zM7 13h1v1h-1zM14 13h1v1h-1zM2 14h1v1h-1zM8 14h1v1h-1zM9 14h1v1h-1zM13 14h1v1h-1zM12 15h1v1h-1z"/><path fill="#d70000" d="M4 0h1v1h-1zM11 1h1v1h-1zM12 2h1v1h-1zM7 3h1v1h-1zM11 3h1v1h-1zM14 3h1v1h-1zM15 3h1v1h-1zM3 5h1v1h-1zM4 5h1v1h-1zM2 7h1v1h-1zM10 7h1v1h-1zM0 8h1v1h-1zM4 8h1v1h-1zM2 9h1v1h-1zM5 9h1v1h-1zM7 9h1v1h-1zM11 9h1v1h-1zM14 10h1v1h-1zM3 11h1v1h-1zM1 12h1v1h-1zM2 12h1v1h-1zM3 12h1v1h-1zM10 12h1v1h-1zM0 13h1v1h-1zM12 13h1v1h-1zM13 13h1v1h-1zM5 14h1v1h-1z"/><path fill="#df0000" d="M5 0h1v1h-1zM10 0h1v1h-1zM13 1h1v1h-1zM2 5h1v1h-1zM2 8h1v1h-1zM5 8h1v1h-1zM13 9h1v1h-1zM8 10h1v1h-1zM15 10h1v1h-1zM8 13h1v1h-1zM11 13h1v1h-1zM7 14h1v1h-1z"/><path fill="#bf0000" d="M1 1h1v1h-1zM5 1h1v1h-1zM8 1h1v1h-1zM3 2h1v1h-1zM6 2h1v1h-1zM8 2h1v1h-1zM8 3h1v1h-1zM0 4h1v1h-1zM4 4h1v1h-1zM6 4h1v1h-1zM0 5h1v1h-1zM5 5h1v1h-1zM2 6h1v1h-1zM7 6h1v1h-1zM10 6h1v1h-1zM12 6h1v1h-1zM1 7h1v1h-1zM4 7h1v1h-1zM5 7h1v1h-1zM15 7h1v1h-1zM6 8h1v1h-1zM8 8h1v1h-1zM11 8h1v1h-1zM15 8h1v1h-1zM3 9h1v1h-1zM4 9h1v1h-1zM8 9h1v1h-1zM9 9h1v1h-1zM12 9h1v1h-1zM14 9h1v1h-1zM1 10h1v1h-1zM7 10h1v1h-1zM11 10h1v1h-1zM9 11h1v1h-1zM10 11h1v1h-1zM14 11h1v1h-1zM4 12h1v1h-1zM5 12h1v1h-1zM7 12h1v1h-1zM8 12h1v1h-1zM11 12h1v1h-1zM13 12h1v1h-1zM0 14h1v1h-1zM3 14h1v1h-1zM4 14h1v1h-1zM2 15h1v1h-1zM10 15h1v1h-1zM13 15h1v1h-1z"/><path fill="#b70000" d="M6 1h1v1h-1zM12 1h1v1h-1zM0 2h1v1h-1zM15 2h1v1h-1zM2 3h1v1h-1zM13 3h1v1h-1zM1 4h1v1h-1zM2 4h1v1h-1zM9 4h1v1h-1zM1 5h1v1h-1zM9 5h1v1h-1zM9 6h1v1h-1zM13 6h1v1h-1zM14 6h1v1h-1zM7 7h1v1h-1zM3 8h1v1h-1zM10 10h1v1h-1zM0 11h1v1h-1zM6 11h1v1h-1zM13 11h1v1h-1zM12 12h1v1h-1zM14 12h1v1h-1zM1 13h1v1h-1zM1 14h1v1h-1zM6 14h1v1h-1zM10 14h1v1h-1zM5 15h1v1h-1zM8 15h1v1h-1zM9 15h1v1h-1z"/><path fill="#a70000" d="M6 5h1v1h-1zM5 6h1v1h-1z"/><path fill="#e70000" d="M10 5h1v1h-1zM12 11h1v1h-1zM15 13h1v1h-1z"/><path fill="#ef0000" d="M12 5h1v1h-1z"/><path fill="#af0000" d="M6 7h1v1h-1zM10 8h1v1h-1zM0 9h1v1h-1zM0 10h1v1h-1zM9 13h1v1h-1z"/></g><svg x="0" y="0" width="60" height="80" overflow="hidden"><use href="#ov"/><path fill="#000" d="M0 0h11v5h-7v3h-4zM47 0h13v14zM0 73h3v2h7v5h-10zM50 75h6v-3h4v8h-10z"/><use href="#sat" y="0"/></svg></g>
<g transform="translate(124 356)"><g transform="scale(3.75 5)" shape-rendering="crispEdges"><path fill="#ffef00" d="M2 0h1v1h-1zM4 0h1v1h-1zM5 0h1v1h-1zM11 0h1v1h-1zM4 1h1v1h-1zM14 1h1v1h-1zM1 3h1v1h-1zM7 4h1v1h-1zM7 5h1v1h-1zM6 6h1v1h-1zM7 6h1v1h-1zM7 7h1v1h-1zM15 7h1v1h-1zM0 10h1v1h-1zM11 10h1v1h-1zM14 12h1v1h-1z"/><path fill="#fff700" d="M3 0h1v1h-1zM2 1h1v1h-1zM15 1h1v1h-1zM9 4h1v1h-1zM1 5h1v1h-1zM10 5h1v1h-1zM0 9h1v1h-1zM3 9h1v1h-1zM2 13h1v1h-1zM2 14h1v1h-1zM11 14h1v1h-1zM15 14h1v1h-1z"/><path fill="#e7ff18" d="M6 0h1v1h-1zM5 2h1v1h-1zM12 3h1v1h-1z"/><path fill="#d7ff28" d="M9 0h1v1h-1zM9 2h1v1h-1zM4 6h1v1h-1zM7 9h1v1h-1z"/><path fill="#f7ff08" d="M10 0h1v1h-1zM3 1h1v1h-1zM1 2h1v1h-1zM11 2h1v1h-1zM3 3h1v1h-1zM6 3h1v1h-1zM3 6h1v1h-1zM12 7h1v1h-1zM3 11h1v1h-1z"/><path fill="#ffcf00" d="M12 0h1v1h-1zM11 1h1v1h-1zM1 4h1v1h-1zM4 5h1v1h-1zM11 5h1v1h-1zM12 5h1v1h-1zM13 5h1v1h-1zM14 5h1v1h-1zM5 6h1v1h-1zM9 6h1v1h-1zM4 9h1v1h-1zM15 10h1v1h-1zM12 12h1v1h-1zM4 13h1v1h-1zM0 14h1v1h-1zM9 14h1v1h-1zM2 15h1v1h-1z"/><path fill="#ffff00" d="M13 0h1v1h-1zM6 1h1v1h-1zM2 2h1v1h-1zM0 3h1v1h-1zM15 3h1v1h-1zM11 4h1v1h-1zM3 8h1v1h-1zM7 8h1v1h-1zM9 9h1v1h-1zM5 10h1v1h-1z"/><path fill="#efff10" d="M1 1h1v1h-1zM9 1h1v1h-1zM12 1h1v1h-1zM4 4h1v1h-1zM8 6h1v1h-1zM2 8h1v1h-1zM3 12h1v1h-1z"/><path fill="#97ff68" d="M5 1h1v1h-1zM10 1h1v1h-1zM4 2h1v1h-1zM6 2h1v1h-1zM7 2h1v1h-1zM10 3h1v1h-1zM3 4h1v1h-1zM5 4h1v1h-1zM6 4h1v1h-1zM8 4h1v1h-1zM10 4h1v1h-1z"/><path fill="#ffdf00" d="M13 1h1v1h-1zM14 2h1v1h-1zM15 2h1v1h-1zM5 3h1v1h-1zM8 3h1v1h-1zM9 3h1v1h-1zM13 3h1v1h-1zM14 3h1v1h-1zM3 5h1v1h-1zM15 5h1v1h-1zM10 6h1v1h-1zM2 7h1v1h-1zM10 7h1v1h-1zM5 8h1v1h-1zM12 8h1v1h-1zM12 9h1v1h-1zM9 10h1v1h-1zM10 10h1v1h-1zM9 12h1v1h-1zM15 12h1v1h-1z"/><path fill="#ffc700" d="M3 2h1v1h-1zM7 3h1v1h-1zM14 4h1v1h-1zM8 5h1v1h-1zM1 7h1v1h-1zM4 7h1v1h-1zM6 7h1v1h-1zM11 7h1v1h-1zM13 8h1v1h-1zM14 8h1v1h-1zM10 9h1v1h-1zM2 10h1v1h-1zM4 11h1v1h-1zM6 11h1v1h-1zM8 11h1v1h-1zM14 11h1v1h-1zM13 12h1v1h-1zM1 13h1v1h-1zM9 13h1v1h-1zM3 14h1v1h-1zM14 14h1v1h-1zM13 15h1v1h-1z"/><path fill="#ffe700" d="M8 2h1v1h-1zM10 2h1v1h-1zM4 3h1v1h-1zM0 5h1v1h-1zM0 6h1v1h-1zM11 6h1v1h-1zM0 7h1v1h-1zM10 8h1v1h-1zM11 9h1v1h-1zM13 9h1v1h-1zM3 10h1v1h-1zM14 10h1v1h-1zM0 11h1v1h-1zM0 12h1v1h-1zM0 13h1v1h-1zM14 13h1v1h-1zM6 15h1v1h-1z"/><path fill="#ffbf00" d="M12 2h1v1h-1zM2 4h1v1h-1zM5 5h1v1h-1zM12 6h1v1h-1zM8 7h1v1h-1zM4 8h1v1h-1zM11 8h1v1h-1zM1 9h1v1h-1zM14 9h1v1h-1zM6 10h1v1h-1zM2 11h1v1h-1zM9 11h1v1h-1zM10 11h1v1h-1zM13 11h1v1h-1zM1 12h1v1h-1z"/><path fill="#ffd700" d="M13 2h1v1h-1zM15 4h1v1h-1zM2 5h1v1h-1zM6 5h1v1h-1zM5 7h1v1h-1zM1 8h1v1h-1zM8 8h1v1h-1zM8 9h1v1h-1zM15 9h1v1h-1zM1 10h1v1h-1zM7 10h1v1h-1zM11 11h1v1h-1zM15 11h1v1h-1zM4 12h1v1h-1zM7 12h1v1h-1zM10 12h1v1h-1zM5 13h1v1h-1zM6 13h1v1h-1zM5 14h1v1h-1zM12 14h1v1h-1z"/><path fill="#ffb700" d="M2 3h1v1h-1zM11 3h1v1h-1zM13 4h1v1h-1zM15 6h1v1h-1zM3 7h1v1h-1zM13 7h1v1h-1zM14 7h1v1h-1zM6 8h1v1h-1zM9 8h1v1h-1zM13 10h1v1h-1zM7 11h1v1h-1zM12 11h1v1h-1zM1 14h1v1h-1zM4 14h1v1h-1zM6 14h1v1h-1zM8 14h1v1h-1zM7 15h1v1h-1zM11 15h1v1h-1z"/><path fill="#cfff30" d="M0 4h1v1h-1z"/><path fill="#ff9f00" d="M12 4h1v1h-1zM8 10h1v1h-1zM1 11h1v1h-1zM5 12h1v1h-1zM3 13h1v1h-1z"/><path fill="#ffaf00" d="M9 5h1v1h-1zM1 6h1v1h-1zM2 6h1v1h-1zM14 6h1v1h-1zM2 9h1v1h-1zM6 9h1v1h-1zM4 10h1v1h-1zM5 11h1v1h-1zM2 12h1v1h-1zM13 13h1v1h-1zM13 14h1v1h-1zM12 15h1v1h-1z"/><path fill="#ff8f00" d="M13 6h1v1h-1zM15 8h1v1h-1zM5 9h1v1h-1zM12 10h1v1h-1zM8 13h1v1h-1zM10 13h1v1h-1zM11 13h1v1h-1zM3 15h1v1h-1zM10 15h1v1h-1z"/><path fill="#ffa700" d="M9 7h1v1h-1zM0 8h1v1h-1zM6 12h1v1h-1zM7 13h1v1h-1zM15 13h1v1h-1zM4 15h1v1h-1z"/><path fill="#ff9700" d="M8 12h1v1h-1zM12 13h1v1h-1zM5 15h1v1h-1z"/><path fill="#ff8700" d="M11 12h1v1h-1zM7 14h1v1h-1zM8 15h1v1h-1z"/><path fill="#ff7000" d="M10 14h1v1h-1z"/><path fill="#ff7800" d="M9 15h1v1h-1z"/></g><svg x="0" y="0" width="60" height="80" overflow="hidden"><use href="#ov"/><path fill="#000" d="M0 0h14.5v5h-10.5v5h-4zM53 0h7v10l-2-4l-2-3zM0 75h8v5h-8zM53 75h7v5h-7z"/><use href="#sat" y="0"/></svg></g>
<g transform="translate(4 436)"><g transform="scale(3.75 5)" shape-rendering="crispEdges"><path fill="#ff0800" d="M2 0h1v1h-1zM9 0h1v1h-1zM14 0h1v1h-1zM0 1h1v1h-1zM4 1h1v1h-1zM11 1h1v1h-1zM1 2h1v1h-1zM5 2h1v1h-1zM7 2h1v1h-1zM1 3h1v1h-1zM7 5h1v1h-1zM13 5h1v1h-1zM4 6h1v1h-1zM11 6h1v1h-1zM12 6h1v1h-1zM14 6h1v1h-1zM0 7h1v1h-1zM5 7h1v1h-1zM8 7h1v1h-1zM10 7h1v1h-1zM2 8h1v1h-1zM8 8h1v1h-1zM12 8h1v1h-1zM9 9h1v1h-1zM11 9h1v1h-1zM7 10h1v1h-1zM9 10h1v1h-1zM15 10h1v1h-1zM4 11h1v1h-1zM8 11h1v1h-1zM2 12h1v1h-1zM8 12h1v1h-1zM10 12h1v1h-1zM13 12h1v1h-1zM6 13h1v1h-1zM11 13h1v1h-1zM14 13h1v1h-1zM0 14h1v1h-1zM11 14h1v1h-1z"/><path fill="#e70000" d="M3 0h1v1h-1zM8 0h1v1h-1zM9 2h1v1h-1zM7 3h1v1h-1zM9 5h1v1h-1zM15 6h1v1h-1zM11 7h1v1h-1zM9 8h1v1h-1zM13 8h1v1h-1zM2 9h1v1h-1zM10 9h1v1h-1zM14 9h1v1h-1zM7 11h1v1h-1zM0 13h1v1h-1zM8 13h1v1h-1zM12 13h1v1h-1zM4 14h1v1h-1zM10 14h1v1h-1zM14 14h1v1h-1zM5 15h1v1h-1zM10 15h1v1h-1z"/><path fill="#f70000" d="M4 0h1v1h-1zM5 0h1v1h-1zM7 0h1v1h-1zM1 1h1v1h-1zM2 1h1v1h-1zM5 1h1v1h-1zM7 1h1v1h-1zM9 1h1v1h-1zM12 1h1v1h-1zM15 1h1v1h-1zM2 2h1v1h-1zM10 2h1v1h-1zM14 2h1v1h-1zM15 2h1v1h-1zM0 3h1v1h-1zM8 3h1v1h-1zM9 3h1v1h-1zM10 3h1v1h-1zM14 3h1v1h-1zM15 3h1v1h-1zM0 4h1v1h-1zM1 4h1v1h-1zM4 4h1v1h-1zM9 4h1v1h-1zM11 4h1v1h-1zM14 4h1v1h-1zM15 4h1v1h-1zM3 5h1v1h-1zM5 5h1v1h-1zM10 5h1v1h-1zM11 5h1v1h-1zM3 6h1v1h-1zM8 6h1v1h-1zM2 7h1v1h-1zM3 7h1v1h-1zM7 7h1v1h-1zM9 7h1v1h-1zM1 8h1v1h-1zM4 8h1v1h-1zM0 9h1v1h-1zM1 9h1v1h-1zM3 9h1v1h-1zM4 9h1v1h-1zM5 9h1v1h-1zM7 9h1v1h-1zM1 10h1v1h-1zM2 10h1v1h-1zM5 10h1v1h-1zM10 10h1v1h-1zM11 10h1v1h-1zM12 10h1v1h-1zM13 10h1v1h-1zM0 11h1v1h-1zM1 11h1v1h-1zM2 11h1v1h-1zM9 11h1v1h-1zM10 11h1v1h-1zM0 12h1v1h-1zM1 12h1v1h-1zM5 12h1v1h-1zM9 12h1v1h-1zM4 13h1v1h-1zM5 13h1v1h-1zM9 13h1v1h-1zM10 13h1v1h-1zM13 13h1v1h-1zM9 14h1v1h-1zM12 14h1v1h-1zM15 14h1v1h-1zM2 15h1v1h-1zM7 15h1v1h-1zM8 15h1v1h-1z"/><path fill="#ff1000" d="M6 0h1v1h-1zM10 0h1v1h-1zM0 2h1v1h-1zM4 3h1v1h-1zM8 4h1v1h-1zM7 6h1v1h-1zM12 9h1v1h-1zM3 10h1v1h-1zM8 10h1v1h-1zM5 11h1v1h-1zM6 11h1v1h-1zM2 14h1v1h-1zM13 14h1v1h-1zM14 15h1v1h-1z"/><path fill="#ff0000" d="M11 0h1v1h-1zM12 0h1v1h-1zM13 0h1v1h-1zM6 1h1v1h-1zM10 1h1v1h-1zM14 1h1v1h-1zM4 2h1v1h-1zM6 2h1v1h-1zM8 2h1v1h-1zM11 2h1v1h-1zM13 2h1v1h-1zM6 3h1v1h-1zM12 3h1v1h-1zM13 3h1v1h-1zM2 4h1v1h-1zM10 4h1v1h-1zM12 4h1v1h-1zM13 4h1v1h-1zM0 5h1v1h-1zM2 5h1v1h-1zM4 5h1v1h-1zM6 5h1v1h-1zM14 5h1v1h-1zM1 6h1v1h-1zM2 6h1v1h-1zM5 6h1v1h-1zM6 6h1v1h-1zM13 6h1v1h-1zM1 7h1v1h-1zM12 7h1v1h-1zM15 7h1v1h-1zM0 8h1v1h-1zM5 8h1v1h-1zM6 8h1v1h-1zM10 8h1v1h-1zM11 8h1v1h-1zM8 9h1v1h-1zM13 9h1v1h-1zM0 10h1v1h-1zM4 10h1v1h-1zM14 10h1v1h-1zM13 11h1v1h-1zM14 11h1v1h-1zM15 11h1v1h-1zM6 12h1v1h-1zM7 12h1v1h-1zM11 12h1v1h-1zM14 12h1v1h-1zM1 13h1v1h-1zM3 13h1v1h-1zM1 14h1v1h-1zM5 14h1v1h-1zM6 14h1v1h-1zM7 14h1v1h-1zM8 14h1v1h-1zM6 15h1v1h-1zM9 15h1v1h-1zM11 15h1v1h-1z"/><path fill="#ef0000" d="M3 1h1v1h-1zM8 1h1v1h-1zM13 1h1v1h-1zM3 2h1v1h-1zM12 2h1v1h-1zM2 3h1v1h-1zM3 3h1v1h-1zM11 3h1v1h-1zM3 4h1v1h-1zM5 4h1v1h-1zM7 4h1v1h-1zM8 5h1v1h-1zM12 5h1v1h-1zM15 5h1v1h-1zM0 6h1v1h-1zM9 6h1v1h-1zM10 6h1v1h-1zM4 7h1v1h-1zM6 7h1v1h-1zM13 7h1v1h-1zM14 7h1v1h-1zM3 8h1v1h-1zM7 8h1v1h-1zM14 8h1v1h-1zM15 8h1v1h-1zM6 9h1v1h-1zM15 9h1v1h-1zM6 10h1v1h-1zM3 11h1v1h-1zM11 11h1v1h-1zM3 12h1v1h-1zM4 12h1v1h-1zM12 12h1v1h-1zM15 12h1v1h-1zM2 13h1v1h-1zM7 13h1v1h-1zM15 13h1v1h-1zM3 14h1v1h-1zM3 15h1v1h-1zM4 15h1v1h-1zM12 15h1v1h-1zM13 15h1v1h-1z"/><path fill="#ff1800" d="M5 3h1v1h-1zM6 4h1v1h-1zM1 5h1v1h-1z"/><path fill="#d70000" d="M12 11h1v1h-1z"/></g><svg x="0" y="0" width="60" height="80" overflow="hidden"><use href="#ov"/><path fill="#000" d="M0 0h10v5h-7v2h-3zM52.5 0h7.5v9zM0 73h3v2h7v5h-10zM54 75h3v-2h3v7h-6z"/><use href="#sat" y="6"/></svg></g>
<g transform="translate(64 436)"><g transform="scale(3.75 5)" shape-rendering="crispEdges"><path fill="#df0000" d="M2 0h1v1h-1zM7 0h1v1h-1zM8 0h1v1h-1zM9 1h1v1h-1zM10 1h1v1h-1zM13 1h1v1h-1zM15 2h1v1h-1zM1 3h1v1h-1zM5 3h1v1h-1zM11 3h1v1h-1zM14 3h1v1h-1zM1 4h1v1h-1zM6 4h1v1h-1zM14 4h1v1h-1zM2 5h1v1h-1zM7 5h1v1h-1zM10 5h1v1h-1zM14 5h1v1h-1zM15 5h1v1h-1zM3 6h1v1h-1zM8 6h1v1h-1zM12 6h1v1h-1zM14 6h1v1h-1zM2 7h1v1h-1zM4 7h1v1h-1zM5 7h1v1h-1zM14 7h1v1h-1zM12 8h1v1h-1zM4 9h1v1h-1zM5 9h1v1h-1zM6 9h1v1h-1zM14 9h1v1h-1zM0 10h1v1h-1zM8 10h1v1h-1zM1 11h1v1h-1zM15 11h1v1h-1zM0 12h1v1h-1zM1 12h1v1h-1zM4 12h1v1h-1zM5 12h1v1h-1zM9 12h1v1h-1zM10 12h1v1h-1zM13 12h1v1h-1zM0 13h1v1h-1zM2 13h1v1h-1zM3 13h1v1h-1zM5 13h1v1h-1zM11 13h1v1h-1zM15 13h1v1h-1zM0 14h1v1h-1zM1 14h1v1h-1zM3 14h1v1h-1zM5 14h1v1h-1zM9 14h1v1h-1zM11 14h1v1h-1zM15 14h1v1h-1zM2 15h1v1h-1zM4 15h1v1h-1zM7 15h1v1h-1zM9 15h1v1h-1z"/><path fill="#e70000" d="M3 0h1v1h-1zM4 0h1v1h-1zM5 0h1v1h-1zM6 0h1v1h-1zM10 0h1v1h-1zM12 0h1v1h-1zM0 1h1v1h-1zM2 1h1v1h-1zM0 2h1v1h-1zM1 2h1v1h-1zM2 2h1v1h-1zM4 2h1v1h-1zM5 2h1v1h-1zM7 2h1v1h-1zM8 2h1v1h-1zM9 2h1v1h-1zM12 2h1v1h-1zM2 3h1v1h-1zM3 3h1v1h-1zM6 3h1v1h-1zM10 3h1v1h-1zM12 3h1v1h-1zM13 3h1v1h-1zM0 4h1v1h-1zM3 4h1v1h-1zM4 4h1v1h-1zM7 4h1v1h-1zM11 4h1v1h-1zM4 5h1v1h-1zM9 5h1v1h-1zM13 5h1v1h-1zM1 6h1v1h-1zM2 6h1v1h-1zM6 6h1v1h-1zM7 6h1v1h-1zM15 6h1v1h-1zM1 7h1v1h-1zM3 7h1v1h-1zM9 7h1v1h-1zM4 8h1v1h-1zM6 8h1v1h-1zM7 8h1v1h-1zM9 8h1v1h-1zM10 8h1v1h-1zM11 8h1v1h-1zM1 9h1v1h-1zM2 9h1v1h-1zM3 9h1v1h-1zM7 9h1v1h-1zM8 9h1v1h-1zM9 9h1v1h-1zM15 9h1v1h-1zM4 10h1v1h-1zM7 10h1v1h-1zM9 10h1v1h-1zM10 10h1v1h-1zM11 10h1v1h-1zM0 11h1v1h-1zM7 11h1v1h-1zM8 11h1v1h-1zM9 11h1v1h-1zM10 11h1v1h-1zM14 11h1v1h-1zM11 12h1v1h-1zM14 12h1v1h-1zM6 13h1v1h-1zM14 13h1v1h-1zM7 14h1v1h-1zM8 14h1v1h-1zM10 14h1v1h-1zM14 14h1v1h-1zM8 15h1v1h-1zM10 15h1v1h-1zM13 15h1v1h-1z"/><path fill="#ef0000" d="M9 0h1v1h-1zM11 0h1v1h-1zM1 1h1v1h-1zM3 1h1v1h-1zM7 1h1v1h-1zM8 1h1v1h-1zM3 2h1v1h-1zM10 2h1v1h-1zM11 2h1v1h-1zM4 3h1v1h-1zM8 3h1v1h-1zM5 4h1v1h-1zM9 4h1v1h-1zM12 4h1v1h-1zM13 4h1v1h-1zM15 4h1v1h-1zM5 5h1v1h-1zM12 5h1v1h-1zM0 6h1v1h-1zM5 6h1v1h-1zM9 6h1v1h-1zM11 6h1v1h-1zM0 7h1v1h-1zM6 7h1v1h-1zM7 7h1v1h-1zM12 7h1v1h-1zM13 7h1v1h-1zM15 7h1v1h-1zM0 8h1v1h-1zM2 8h1v1h-1zM8 8h1v1h-1zM13 8h1v1h-1zM14 8h1v1h-1zM13 9h1v1h-1zM6 10h1v1h-1zM2 11h1v1h-1zM5 11h1v1h-1zM11 11h1v1h-1zM3 12h1v1h-1zM6 12h1v1h-1zM7 12h1v1h-1zM8 12h1v1h-1zM12 12h1v1h-1zM15 12h1v1h-1zM1 13h1v1h-1zM4 13h1v1h-1zM7 13h1v1h-1zM8 13h1v1h-1zM10 13h1v1h-1zM13 13h1v1h-1zM4 14h1v1h-1zM13 14h1v1h-1zM3 15h1v1h-1zM12 15h1v1h-1z"/><path fill="#f70000" d="M13 0h1v1h-1zM4 1h1v1h-1zM11 1h1v1h-1zM12 1h1v1h-1zM14 1h1v1h-1zM7 3h1v1h-1zM3 5h1v1h-1zM6 5h1v1h-1zM4 6h1v1h-1zM10 7h1v1h-1zM15 8h1v1h-1zM10 9h1v1h-1zM12 9h1v1h-1zM12 11h1v1h-1zM2 12h1v1h-1zM9 13h1v1h-1zM11 15h1v1h-1z"/><path fill="#d70000" d="M5 1h1v1h-1zM6 2h1v1h-1zM14 2h1v1h-1zM0 3h1v1h-1zM15 3h1v1h-1zM2 4h1v1h-1zM8 4h1v1h-1zM10 4h1v1h-1zM1 5h1v1h-1zM11 5h1v1h-1zM13 6h1v1h-1zM8 7h1v1h-1zM1 8h1v1h-1zM0 9h1v1h-1zM11 9h1v1h-1zM1 10h1v1h-1zM3 10h1v1h-1zM12 10h1v1h-1zM14 10h1v1h-1zM15 10h1v1h-1zM3 11h1v1h-1zM6 11h1v1h-1zM13 11h1v1h-1zM12 13h1v1h-1zM2 14h1v1h-1zM12 14h1v1h-1zM5 15h1v1h-1zM6 15h1v1h-1z"/><path fill="#c70000" d="M6 1h1v1h-1zM10 6h1v1h-1zM5 8h1v1h-1zM4 11h1v1h-1z"/><path fill="#cf0000" d="M13 2h1v1h-1zM9 3h1v1h-1zM0 5h1v1h-1zM8 5h1v1h-1zM11 7h1v1h-1zM3 8h1v1h-1zM2 10h1v1h-1zM5 10h1v1h-1z"/><path fill="#ff0000" d="M13 10h1v1h-1zM6 14h1v1h-1z"/></g><svg x="0" y="0" width="60" height="80" overflow="hidden"><use href="#ov"/><path fill="#000" d="M0 0h11v5h-7v3h-4zM47 0h13v14zM0 73h3v2h7v5h-10zM50 75h6v-3h4v8h-10z"/><use href="#sat" y="6"/></svg></g>
<g transform="translate(124 436)"><g transform="scale(3.75 5)" shape-rendering="crispEdges"><path fill="#ffa700" d="M2 0h1v1h-1zM4 0h1v1h-1zM7 0h1v1h-1zM13 0h1v1h-1zM6 2h1v1h-1zM2 3h1v1h-1zM3 3h1v1h-1zM3 4h1v1h-1zM0 6h1v1h-1zM3 6h1v1h-1zM9 6h1v1h-1zM10 6h1v1h-1zM0 7h1v1h-1zM9 7h1v1h-1zM11 7h1v1h-1zM7 8h1v1h-1zM15 8h1v1h-1zM11 9h1v1h-1zM12 9h1v1h-1zM5 10h1v1h-1zM6 10h1v1h-1zM7 10h1v1h-1zM15 10h1v1h-1zM6 12h1v1h-1zM8 12h1v1h-1zM11 12h1v1h-1zM12 13h1v1h-1zM2 14h1v1h-1zM9 14h1v1h-1zM13 14h1v1h-1zM15 14h1v1h-1zM8 15h1v1h-1zM11 15h1v1h-1z"/><path fill="#ffaf00" d="M3 0h1v1h-1zM6 0h1v1h-1zM3 1h1v1h-1zM7 1h1v1h-1zM9 2h1v1h-1zM0 3h1v1h-1zM12 4h1v1h-1zM3 5h1v1h-1zM4 5h1v1h-1zM7 5h1v1h-1zM12 5h1v1h-1zM14 5h1v1h-1zM4 6h1v1h-1zM8 7h1v1h-1zM10 7h1v1h-1zM2 8h1v1h-1zM8 8h1v1h-1zM4 9h1v1h-1zM3 10h1v1h-1zM1 11h1v1h-1zM5 11h1v1h-1zM8 11h1v1h-1zM0 12h1v1h-1zM10 12h1v1h-1zM14 12h1v1h-1zM9 13h1v1h-1zM11 13h1v1h-1zM10 14h1v1h-1zM4 15h1v1h-1z"/><path fill="#ff9700" d="M5 0h1v1h-1zM1 1h1v1h-1zM4 1h1v1h-1zM13 2h1v1h-1zM5 3h1v1h-1zM6 3h1v1h-1zM8 3h1v1h-1zM6 4h1v1h-1zM10 4h1v1h-1zM13 4h1v1h-1zM11 6h1v1h-1zM15 6h1v1h-1zM3 9h1v1h-1zM6 9h1v1h-1zM1 10h1v1h-1zM2 11h1v1h-1zM4 11h1v1h-1zM1 13h1v1h-1zM1 14h1v1h-1zM12 14h1v1h-1zM2 15h1v1h-1zM9 15h1v1h-1z"/><path fill="#ffb700" d="M9 0h1v1h-1zM9 1h1v1h-1zM13 1h1v1h-1zM8 2h1v1h-1zM10 3h1v1h-1zM14 3h1v1h-1zM9 4h1v1h-1zM15 4h1v1h-1zM0 5h1v1h-1zM2 5h1v1h-1zM8 5h1v1h-1zM11 5h1v1h-1zM6 6h1v1h-1zM1 7h1v1h-1zM13 7h1v1h-1zM1 8h1v1h-1zM10 8h1v1h-1zM2 10h1v1h-1zM12 10h1v1h-1zM13 10h1v1h-1zM0 11h1v1h-1zM7 11h1v1h-1zM10 11h1v1h-1zM6 14h1v1h-1zM8 14h1v1h-1zM7 15h1v1h-1z"/><path fill="#ffbf00" d="M10 0h1v1h-1zM6 1h1v1h-1zM15 1h1v1h-1zM7 2h1v1h-1zM11 3h1v1h-1zM15 3h1v1h-1zM11 4h1v1h-1zM9 5h1v1h-1zM2 6h1v1h-1zM12 6h1v1h-1zM4 7h1v1h-1zM6 8h1v1h-1zM0 9h1v1h-1zM7 9h1v1h-1zM10 9h1v1h-1zM0 10h1v1h-1zM10 10h1v1h-1zM12 11h1v1h-1zM13 11h1v1h-1zM8 13h1v1h-1zM11 14h1v1h-1zM6 15h1v1h-1z"/><path fill="#ffc700" d="M11 0h1v1h-1zM12 1h1v1h-1zM1 2h1v1h-1zM3 2h1v1h-1zM7 3h1v1h-1zM0 4h1v1h-1zM5 4h1v1h-1zM7 4h1v1h-1zM6 5h1v1h-1zM10 5h1v1h-1zM5 7h1v1h-1zM6 7h1v1h-1zM7 7h1v1h-1zM14 8h1v1h-1zM13 9h1v1h-1zM8 10h1v1h-1zM6 11h1v1h-1zM2 12h1v1h-1zM14 14h1v1h-1z"/><path fill="#ffdf00" d="M12 0h1v1h-1zM13 5h1v1h-1z"/><path fill="#ff7000" d="M2 1h1v1h-1zM5 9h1v1h-1zM4 12h1v1h-1zM3 15h1v1h-1z"/><path fill="#ff9f00" d="M5 1h1v1h-1zM5 2h1v1h-1zM15 2h1v1h-1zM13 3h1v1h-1zM13 6h1v1h-1zM2 7h1v1h-1zM0 8h1v1h-1zM3 8h1v1h-1zM4 8h1v1h-1zM2 9h1v1h-1zM9 11h1v1h-1zM14 11h1v1h-1zM15 11h1v1h-1zM12 12h1v1h-1zM3 13h1v1h-1zM4 13h1v1h-1zM6 13h1v1h-1zM10 13h1v1h-1zM3 14h1v1h-1zM4 14h1v1h-1zM5 14h1v1h-1z"/><path fill="#ff8f00" d="M10 1h1v1h-1zM2 4h1v1h-1zM8 4h1v1h-1zM1 5h1v1h-1zM5 5h1v1h-1zM5 6h1v1h-1zM12 7h1v1h-1zM9 8h1v1h-1zM12 8h1v1h-1zM4 10h1v1h-1zM1 12h1v1h-1zM2 13h1v1h-1zM0 14h1v1h-1zM7 14h1v1h-1zM5 15h1v1h-1zM10 15h1v1h-1zM13 15h1v1h-1z"/><path fill="#ffcf00" d="M11 1h1v1h-1zM14 1h1v1h-1zM11 2h1v1h-1zM12 2h1v1h-1zM14 4h1v1h-1zM14 6h1v1h-1zM5 8h1v1h-1z"/><path fill="#ffe700" d="M2 2h1v1h-1zM11 8h1v1h-1z"/><path fill="#ff8700" d="M4 2h1v1h-1zM4 3h1v1h-1zM9 3h1v1h-1zM4 4h1v1h-1zM8 9h1v1h-1zM14 9h1v1h-1zM15 9h1v1h-1zM9 10h1v1h-1zM11 10h1v1h-1zM14 10h1v1h-1zM11 11h1v1h-1zM9 12h1v1h-1zM15 13h1v1h-1zM12 15h1v1h-1z"/><path fill="#ffd700" d="M10 2h1v1h-1zM14 2h1v1h-1zM12 3h1v1h-1zM15 5h1v1h-1zM7 6h1v1h-1zM8 6h1v1h-1zM14 7h1v1h-1zM13 8h1v1h-1zM9 9h1v1h-1zM13 12h1v1h-1zM7 13h1v1h-1z"/><path fill="#ff6000" d="M1 3h1v1h-1z"/><path fill="#ff8000" d="M1 4h1v1h-1zM3 12h1v1h-1zM15 12h1v1h-1zM5 13h1v1h-1zM13 13h1v1h-1z"/><path fill="#ff6800" d="M1 6h1v1h-1zM1 9h1v1h-1z"/><path fill="#ff7800" d="M3 7h1v1h-1zM3 11h1v1h-1zM5 12h1v1h-1zM7 12h1v1h-1z"/><path fill="#ffef00" d="M15 7h1v1h-1zM0 13h1v1h-1zM14 13h1v1h-1z"/></g><svg x="0" y="0" width="60" height="80" overflow="hidden"><use href="#ov"/><path fill="#000" d="M0 0h14.5v5h-10.5v5h-4zM53 0h7v10l-2-4l-2-3zM0 75h8v5h-8zM53 75h7v5h-7z"/><use href="#sat" y="6"/></svg></g>
<g transform="translate(4 516)"><g transform="scale(3.75 5)" shape-rendering="crispEdges"><path fill="#ff0800" d="M2 0h1v1h-1zM5 0h1v1h-1zM6 0h1v1h-1zM8 0h1v1h-1zM10 0h1v1h-1zM5 1h1v1h-1zM6 1h1v1h-1zM8 1h1v1h-1zM12 1h1v1h-1zM13 1h1v1h-1zM14 1h1v1h-1zM15 1h1v1h-1zM0 2h1v1h-1zM1 2h1v1h-1zM2 2h1v1h-1zM4 2h1v1h-1zM10 2h1v1h-1zM14 2h1v1h-1zM15 2h1v1h-1zM3 3h1v1h-1zM4 3h1v1h-1zM7 3h1v1h-1zM8 3h1v1h-1zM9 3h1v1h-1zM10 3h1v1h-1zM15 3h1v1h-1zM1 4h1v1h-1zM8 4h1v1h-1zM11 4h1v1h-1zM13 4h1v1h-1zM2 5h1v1h-1zM3 5h1v1h-1zM6 5h1v1h-1zM13 5h1v1h-1zM15 5h1v1h-1zM1 6h1v1h-1zM5 6h1v1h-1zM7 6h1v1h-1zM8 6h1v1h-1zM14 6h1v1h-1zM1 7h1v1h-1zM2 7h1v1h-1zM3 7h1v1h-1zM7 7h1v1h-1zM14 7h1v1h-1zM0 8h1v1h-1zM2 8h1v1h-1zM3 8h1v1h-1zM4 8h1v1h-1zM7 8h1v1h-1zM0 9h1v1h-1zM1 9h1v1h-1zM2 9h1v1h-1zM11 9h1v1h-1zM12 9h1v1h-1zM13 9h1v1h-1zM15 9h1v1h-1zM2 10h1v1h-1zM10 10h1v1h-1zM14 10h1v1h-1zM5 11h1v1h-1zM14 11h1v1h-1zM1 12h1v1h-1zM3 12h1v1h-1zM5 12h1v1h-1zM6 12h1v1h-1zM10 12h1v1h-1zM11 12h1v1h-1zM13 12h1v1h-1zM1 13h1v1h-1zM6 13h1v1h-1zM8 13h1v1h-1zM13 13h1v1h-1zM0 14h1v1h-1zM2 14h1v1h-1zM10 14h1v1h-1zM7 15h1v1h-1zM8 15h1v1h-1z"/><path fill="#f70000" d="M3 0h1v1h-1zM4 0h1v1h-1zM1 1h1v1h-1zM2 1h1v1h-1zM10 1h1v1h-1zM11 1h1v1h-1zM9 2h1v1h-1zM1 3h1v1h-1zM5 3h1v1h-1zM7 4h1v1h-1zM12 4h1v1h-1zM14 4h1v1h-1zM5 5h1v1h-1zM10 5h1v1h-1zM3 6h1v1h-1zM12 6h1v1h-1zM5 7h1v1h-1zM6 7h1v1h-1zM1 8h1v1h-1zM6 8h1v1h-1zM14 8h1v1h-1zM3 9h1v1h-1zM5 9h1v1h-1zM0 10h1v1h-1zM6 10h1v1h-1zM8 10h1v1h-1zM9 10h1v1h-1zM1 11h1v1h-1zM3 11h1v1h-1zM7 12h1v1h-1zM8 12h1v1h-1zM15 12h1v1h-1zM9 13h1v1h-1zM11 13h1v1h-1zM4 14h1v1h-1zM9 14h1v1h-1zM13 14h1v1h-1zM5 15h1v1h-1zM6 15h1v1h-1zM13 15h1v1h-1z"/><path fill="#ff0000" d="M7 0h1v1h-1zM11 0h1v1h-1zM12 0h1v1h-1zM3 1h1v1h-1zM9 1h1v1h-1zM3 2h1v1h-1zM5 2h1v1h-1zM7 2h1v1h-1zM8 2h1v1h-1zM11 3h1v1h-1zM14 3h1v1h-1zM0 4h1v1h-1zM2 4h1v1h-1zM5 4h1v1h-1zM10 4h1v1h-1zM15 4h1v1h-1zM0 5h1v1h-1zM1 5h1v1h-1zM4 5h1v1h-1zM11 5h1v1h-1zM12 5h1v1h-1zM0 6h1v1h-1zM6 6h1v1h-1zM10 6h1v1h-1zM0 7h1v1h-1zM4 7h1v1h-1zM9 7h1v1h-1zM11 7h1v1h-1zM12 7h1v1h-1zM15 7h1v1h-1zM5 8h1v1h-1zM9 8h1v1h-1zM10 8h1v1h-1zM15 8h1v1h-1zM4 9h1v1h-1zM7 9h1v1h-1zM8 9h1v1h-1zM14 9h1v1h-1zM5 10h1v1h-1zM7 10h1v1h-1zM11 10h1v1h-1zM12 10h1v1h-1zM15 10h1v1h-1zM0 11h1v1h-1zM2 11h1v1h-1zM7 11h1v1h-1zM9 11h1v1h-1zM10 11h1v1h-1zM11 11h1v1h-1zM12 11h1v1h-1zM15 11h1v1h-1zM0 12h1v1h-1zM2 12h1v1h-1zM9 12h1v1h-1zM0 13h1v1h-1zM2 13h1v1h-1zM3 13h1v1h-1zM4 13h1v1h-1zM5 13h1v1h-1zM7 13h1v1h-1zM12 13h1v1h-1zM14 13h1v1h-1zM15 13h1v1h-1zM1 14h1v1h-1zM5 14h1v1h-1zM7 14h1v1h-1zM11 14h1v1h-1zM15 14h1v1h-1zM2 15h1v1h-1zM4 15h1v1h-1zM11 15h1v1h-1zM12 15h1v1h-1zM14 15h1v1h-1z"/><path fill="#ff1000" d="M9 0h1v1h-1zM0 1h1v1h-1zM7 1h1v1h-1zM6 2h1v1h-1zM11 2h1v1h-1zM12 2h1v1h-1zM13 2h1v1h-1zM2 3h1v1h-1zM13 3h1v1h-1zM3 4h1v1h-1zM6 4h1v1h-1zM9 4h1v1h-1zM9 5h1v1h-1zM4 6h1v1h-1zM9 6h1v1h-1zM11 6h1v1h-1zM8 7h1v1h-1zM12 8h1v1h-1zM10 9h1v1h-1zM1 10h1v1h-1zM3 10h1v1h-1zM4 10h1v1h-1zM4 11h1v1h-1zM13 11h1v1h-1zM4 12h1v1h-1zM12 12h1v1h-1zM10 13h1v1h-1zM3 14h1v1h-1zM14 14h1v1h-1zM3 15h1v1h-1zM9 15h1v1h-1zM10 15h1v1h-1z"/><path fill="#ef0000" d="M13 0h1v1h-1zM4 1h1v1h-1zM6 3h1v1h-1zM4 4h1v1h-1zM8 5h1v1h-1zM14 5h1v1h-1zM2 6h1v1h-1zM15 6h1v1h-1zM10 7h1v1h-1zM11 8h1v1h-1zM13 8h1v1h-1zM6 9h1v1h-1zM9 9h1v1h-1zM13 10h1v1h-1zM14 12h1v1h-1zM6 14h1v1h-1z"/><path fill="#ff1800" d="M14 0h1v1h-1zM0 3h1v1h-1zM13 7h1v1h-1zM8 8h1v1h-1zM6 11h1v1h-1zM8 14h1v1h-1z"/><path fill="#e70000" d="M12 3h1v1h-1zM7 5h1v1h-1zM13 6h1v1h-1zM8 11h1v1h-1zM12 14h1v1h-1z"/></g><svg x="0" y="0" width="60" height="80" overflow="hidden"><use href="#ov"/><path fill="#000" d="M0 0h10v5h-7v2h-3zM52.5 0h7.5v9zM0 73h3v2h7v5h-10zM54 75h3v-2h3v7h-6z"/><use href="#sat" y="0"/></svg></g>
<g transform="translate(64 516)"><g transform="scale(3.75 5)" shape-rendering="crispEdges"><path fill="#f70000" d="M2 0h1v1h-1zM3 0h1v1h-1zM12 0h1v1h-1zM1 1h1v1h-1zM4 1h1v1h-1zM5 1h1v1h-1zM8 1h1v1h-1zM1 2h1v1h-1zM3 2h1v1h-1zM7 2h1v1h-1zM9 2h1v1h-1zM11 2h1v1h-1zM13 2h1v1h-1zM15 2h1v1h-1zM4 3h1v1h-1zM7 3h1v1h-1zM12 3h1v1h-1zM15 3h1v1h-1zM2 4h1v1h-1zM4 4h1v1h-1zM5 4h1v1h-1zM10 4h1v1h-1zM12 4h1v1h-1zM13 4h1v1h-1zM1 5h1v1h-1zM5 5h1v1h-1zM6 5h1v1h-1zM7 5h1v1h-1zM9 5h1v1h-1zM11 5h1v1h-1zM12 5h1v1h-1zM14 5h1v1h-1zM0 6h1v1h-1zM1 6h1v1h-1zM2 6h1v1h-1zM8 6h1v1h-1zM9 6h1v1h-1zM12 6h1v1h-1zM15 6h1v1h-1zM1 7h1v1h-1zM4 7h1v1h-1zM9 7h1v1h-1zM13 7h1v1h-1zM3 8h1v1h-1zM5 8h1v1h-1zM6 8h1v1h-1zM11 8h1v1h-1zM12 8h1v1h-1zM0 9h1v1h-1zM5 9h1v1h-1zM13 9h1v1h-1zM15 9h1v1h-1zM1 10h1v1h-1zM13 10h1v1h-1zM14 10h1v1h-1zM0 11h1v1h-1zM6 11h1v1h-1zM14 11h1v1h-1zM1 12h1v1h-1zM2 12h1v1h-1zM3 12h1v1h-1zM6 12h1v1h-1zM10 12h1v1h-1zM12 12h1v1h-1zM13 12h1v1h-1zM15 12h1v1h-1zM1 13h1v1h-1zM2 13h1v1h-1zM3 13h1v1h-1zM5 13h1v1h-1zM6 13h1v1h-1zM7 13h1v1h-1zM12 13h1v1h-1zM15 13h1v1h-1zM1 14h1v1h-1zM5 14h1v1h-1zM12 14h1v1h-1z"/><path fill="#ff0000" d="M4 0h1v1h-1zM5 0h1v1h-1zM7 0h1v1h-1zM10 0h1v1h-1zM2 1h1v1h-1zM6 1h1v1h-1zM7 1h1v1h-1zM9 1h1v1h-1zM11 1h1v1h-1zM2 2h1v1h-1zM4 2h1v1h-1zM6 2h1v1h-1zM8 2h1v1h-1zM12 2h1v1h-1zM9 3h1v1h-1zM14 3h1v1h-1zM1 4h1v1h-1zM8 4h1v1h-1zM11 4h1v1h-1zM14 4h1v1h-1zM10 5h1v1h-1zM13 5h1v1h-1zM3 6h1v1h-1zM5 6h1v1h-1zM10 6h1v1h-1zM13 6h1v1h-1zM14 6h1v1h-1zM0 7h1v1h-1zM2 7h1v1h-1zM3 7h1v1h-1zM8 7h1v1h-1zM14 7h1v1h-1zM1 8h1v1h-1zM8 8h1v1h-1zM9 8h1v1h-1zM2 9h1v1h-1zM3 9h1v1h-1zM10 9h1v1h-1zM0 10h1v1h-1zM2 10h1v1h-1zM4 10h1v1h-1zM5 10h1v1h-1zM7 10h1v1h-1zM11 10h1v1h-1zM15 10h1v1h-1zM3 11h1v1h-1zM5 11h1v1h-1zM8 11h1v1h-1zM0 12h1v1h-1zM8 12h1v1h-1zM14 12h1v1h-1zM10 13h1v1h-1zM11 13h1v1h-1zM9 14h1v1h-1zM2 15h1v1h-1zM3 15h1v1h-1zM5 15h1v1h-1zM6 15h1v1h-1zM7 15h1v1h-1zM9 15h1v1h-1zM12 15h1v1h-1z"/><path fill="#ef0000" d="M6 0h1v1h-1zM8 0h1v1h-1zM9 0h1v1h-1zM0 1h1v1h-1zM3 1h1v1h-1zM12 1h1v1h-1zM13 1h1v1h-1zM5 2h1v1h-1zM10 2h1v1h-1zM14 2h1v1h-1zM3 3h1v1h-1zM5 3h1v1h-1zM6 3h1v1h-1zM8 3h1v1h-1zM11 3h1v1h-1zM13 3h1v1h-1zM7 4h1v1h-1zM0 5h1v1h-1zM2 5h1v1h-1zM3 5h1v1h-1zM4 5h1v1h-1zM8 5h1v1h-1zM15 5h1v1h-1zM4 6h1v1h-1zM7 7h1v1h-1zM10 7h1v1h-1zM11 7h1v1h-1zM15 7h1v1h-1zM0 8h1v1h-1zM15 8h1v1h-1zM1 9h1v1h-1zM6 9h1v1h-1zM7 9h1v1h-1zM8 9h1v1h-1zM9 9h1v1h-1zM12 9h1v1h-1zM14 9h1v1h-1zM8 10h1v1h-1zM12 10h1v1h-1zM4 11h1v1h-1zM9 11h1v1h-1zM10 11h1v1h-1zM12 11h1v1h-1zM15 11h1v1h-1zM4 12h1v1h-1zM11 12h1v1h-1zM4 13h1v1h-1zM9 13h1v1h-1zM13 13h1v1h-1zM14 13h1v1h-1zM6 14h1v1h-1zM10 14h1v1h-1zM11 14h1v1h-1zM13 14h1v1h-1zM14 14h1v1h-1zM8 15h1v1h-1zM10 15h1v1h-1zM11 15h1v1h-1z"/><path fill="#ff0800" d="M11 0h1v1h-1zM10 1h1v1h-1zM0 3h1v1h-1zM1 3h1v1h-1zM2 3h1v1h-1zM10 3h1v1h-1zM6 6h1v1h-1zM7 6h1v1h-1zM11 6h1v1h-1zM12 7h1v1h-1zM13 8h1v1h-1zM4 9h1v1h-1zM11 9h1v1h-1zM3 10h1v1h-1zM6 10h1v1h-1zM1 11h1v1h-1zM7 11h1v1h-1zM11 11h1v1h-1zM13 11h1v1h-1zM7 14h1v1h-1zM8 14h1v1h-1z"/><path fill="#e70000" d="M13 0h1v1h-1zM0 2h1v1h-1zM0 4h1v1h-1zM3 4h1v1h-1zM9 4h1v1h-1zM15 4h1v1h-1zM5 7h1v1h-1zM6 7h1v1h-1zM7 8h1v1h-1zM10 8h1v1h-1zM14 8h1v1h-1zM10 10h1v1h-1zM2 11h1v1h-1zM5 12h1v1h-1zM7 12h1v1h-1zM9 12h1v1h-1zM0 13h1v1h-1zM8 13h1v1h-1zM2 14h1v1h-1zM3 14h1v1h-1zM4 14h1v1h-1zM15 14h1v1h-1zM4 15h1v1h-1z"/><path fill="#df0000" d="M14 1h1v1h-1zM2 8h1v1h-1zM4 8h1v1h-1zM9 10h1v1h-1zM0 14h1v1h-1z"/><path fill="#ff1000" d="M6 4h1v1h-1zM13 15h1v1h-1z"/></g><svg x="0" y="0" width="60" height="80" overflow="hidden"><use href="#ov"/><path fill="#000" d="M0 0h11v5h-7v3h-4zM47 0h13v14zM0 73h3v2h7v5h-10zM50 75h6v-3h4v8h-10z"/><use href="#sat" y="0"/></svg></g>
<g transform="translate(124 516)"><g transform="scale(3.75 5)" shape-rendering="crispEdges"><path fill="#ffa700" d="M2 0h1v1h-1zM5 0h1v1h-1zM12 0h1v1h-1zM8 1h1v1h-1zM2 2h1v1h-1zM3 2h1v1h-1zM14 2h1v1h-1zM8 3h1v1h-1zM10 3h1v1h-1zM7 4h1v1h-1zM7 5h1v1h-1zM14 5h1v1h-1zM15 5h1v1h-1zM0 6h1v1h-1zM1 6h1v1h-1zM2 6h1v1h-1zM8 7h1v1h-1zM10 7h1v1h-1zM6 8h1v1h-1zM9 9h1v1h-1zM8 10h1v1h-1zM10 10h1v1h-1zM7 11h1v1h-1zM10 12h1v1h-1zM9 13h1v1h-1zM14 13h1v1h-1zM7 15h1v1h-1zM8 15h1v1h-1z"/><path fill="#ff8f00" d="M3 0h1v1h-1zM10 0h1v1h-1zM11 0h1v1h-1zM9 1h1v1h-1zM12 1h1v1h-1zM9 2h1v1h-1zM10 2h1v1h-1zM11 2h1v1h-1zM14 3h1v1h-1zM8 5h1v1h-1zM11 5h1v1h-1zM6 6h1v1h-1zM14 6h1v1h-1zM14 7h1v1h-1zM8 8h1v1h-1zM11 8h1v1h-1zM6 9h1v1h-1zM8 9h1v1h-1zM12 9h1v1h-1zM14 9h1v1h-1zM9 11h1v1h-1zM10 11h1v1h-1zM12 11h1v1h-1zM0 12h1v1h-1zM7 12h1v1h-1zM13 12h1v1h-1zM3 14h1v1h-1zM4 14h1v1h-1zM7 14h1v1h-1zM11 15h1v1h-1z"/><path fill="#ff9700" d="M4 0h1v1h-1zM8 0h1v1h-1zM13 0h1v1h-1zM5 1h1v1h-1zM14 1h1v1h-1zM1 2h1v1h-1zM7 2h1v1h-1zM8 2h1v1h-1zM2 3h1v1h-1zM3 3h1v1h-1zM6 3h1v1h-1zM7 3h1v1h-1zM9 3h1v1h-1zM11 3h1v1h-1zM4 4h1v1h-1zM12 4h1v1h-1zM0 5h1v1h-1zM9 5h1v1h-1zM5 6h1v1h-1zM7 6h1v1h-1zM8 6h1v1h-1zM9 6h1v1h-1zM12 6h1v1h-1zM1 7h1v1h-1zM7 7h1v1h-1zM9 7h1v1h-1zM1 8h1v1h-1zM3 8h1v1h-1zM9 8h1v1h-1zM3 9h1v1h-1zM11 9h1v1h-1zM3 10h1v1h-1zM12 10h1v1h-1zM6 11h1v1h-1zM14 12h1v1h-1zM6 13h1v1h-1zM8 13h1v1h-1zM15 13h1v1h-1zM6 14h1v1h-1zM9 14h1v1h-1zM13 14h1v1h-1zM4 15h1v1h-1zM9 15h1v1h-1z"/><path fill="#ff8000" d="M6 0h1v1h-1zM6 1h1v1h-1zM11 1h1v1h-1zM5 2h1v1h-1zM13 3h1v1h-1zM0 4h1v1h-1zM6 4h1v1h-1zM10 4h1v1h-1zM3 5h1v1h-1zM4 5h1v1h-1zM6 5h1v1h-1zM13 6h1v1h-1zM3 7h1v1h-1zM13 7h1v1h-1zM4 8h1v1h-1zM1 9h1v1h-1zM4 10h1v1h-1zM13 10h1v1h-1zM4 11h1v1h-1zM5 11h1v1h-1zM4 12h1v1h-1zM12 13h1v1h-1zM12 14h1v1h-1zM15 14h1v1h-1zM2 15h1v1h-1zM3 15h1v1h-1z"/><path fill="#ff8700" d="M7 0h1v1h-1zM1 1h1v1h-1zM4 1h1v1h-1zM15 1h1v1h-1zM6 2h1v1h-1zM13 2h1v1h-1zM0 3h1v1h-1zM5 3h1v1h-1zM1 4h1v1h-1zM15 4h1v1h-1zM4 6h1v1h-1zM6 7h1v1h-1zM12 7h1v1h-1zM0 8h1v1h-1zM7 8h1v1h-1zM12 8h1v1h-1zM13 8h1v1h-1zM4 9h1v1h-1zM2 10h1v1h-1zM0 11h1v1h-1zM8 11h1v1h-1zM14 11h1v1h-1zM15 11h1v1h-1zM3 12h1v1h-1zM5 12h1v1h-1zM6 12h1v1h-1zM11 12h1v1h-1zM12 12h1v1h-1zM4 13h1v1h-1zM5 13h1v1h-1zM7 13h1v1h-1zM11 13h1v1h-1zM10 14h1v1h-1zM11 14h1v1h-1z"/><path fill="#ff7800" d="M9 0h1v1h-1zM12 3h1v1h-1zM13 4h1v1h-1zM15 6h1v1h-1zM4 7h1v1h-1zM11 7h1v1h-1zM5 8h1v1h-1zM0 9h1v1h-1zM7 10h1v1h-1zM14 10h1v1h-1zM15 10h1v1h-1zM2 12h1v1h-1z"/><path fill="#ff9f00" d="M2 1h1v1h-1zM3 1h1v1h-1zM4 2h1v1h-1zM4 3h1v1h-1zM5 4h1v1h-1zM8 4h1v1h-1zM14 4h1v1h-1zM2 5h1v1h-1zM5 5h1v1h-1zM12 5h1v1h-1zM2 7h1v1h-1zM5 7h1v1h-1zM10 8h1v1h-1zM14 8h1v1h-1zM2 9h1v1h-1zM13 9h1v1h-1zM6 10h1v1h-1zM11 10h1v1h-1zM1 11h1v1h-1zM2 11h1v1h-1zM13 11h1v1h-1zM1 12h1v1h-1zM0 13h1v1h-1zM3 13h1v1h-1zM10 13h1v1h-1zM5 14h1v1h-1zM6 15h1v1h-1z"/><path fill="#ffb700" d="M10 1h1v1h-1zM12 2h1v1h-1zM11 6h1v1h-1zM5 9h1v1h-1zM15 9h1v1h-1zM9 10h1v1h-1zM9 12h1v1h-1zM1 13h1v1h-1zM2 13h1v1h-1zM8 14h1v1h-1z"/><path fill="#ffaf00" d="M13 1h1v1h-1zM1 3h1v1h-1zM15 3h1v1h-1zM1 5h1v1h-1zM10 5h1v1h-1zM10 6h1v1h-1zM0 7h1v1h-1zM15 8h1v1h-1zM0 10h1v1h-1zM1 10h1v1h-1zM3 11h1v1h-1zM11 11h1v1h-1zM8 12h1v1h-1zM13 13h1v1h-1zM1 14h1v1h-1zM2 14h1v1h-1zM14 14h1v1h-1zM10 15h1v1h-1zM13 15h1v1h-1z"/><path fill="#ffc700" d="M15 2h1v1h-1zM13 5h1v1h-1zM3 6h1v1h-1zM15 7h1v1h-1zM2 8h1v1h-1zM5 15h1v1h-1z"/><path fill="#ff7000" d="M2 4h1v1h-1zM10 9h1v1h-1zM15 12h1v1h-1zM12 15h1v1h-1z"/><path fill="#ffbf00" d="M3 4h1v1h-1zM11 4h1v1h-1zM5 10h1v1h-1z"/><path fill="#ff6800" d="M9 4h1v1h-1zM7 9h1v1h-1zM0 14h1v1h-1z"/></g><svg x="0" y="0" width="60" height="80" overflow="hidden"><use href="#ov"/><path fill="#000" d="M0 0h14.5v5h-10.5v5h-4zM53 0h7v10l-2-4l-2-3zM0 75h8v5h-8zM53 75h7v5h-7z"/><use href="#sat" y="0"/></svg></g>
<g filter="url(#gray)"><text x="36.5" y="86" font-size="10.5" fill="#000" stroke="#000" stroke-width="0.35" textLength="11.5" lengthAdjust="spacingAndGlyphs">30</text><text x="52.0" y="69.7" font-size="10.5" fill="#000" stroke="#000" stroke-width="0.35" textLength="11.5" lengthAdjust="spacingAndGlyphs">60</text><text x="96.5" y="86" font-size="10.5" fill="#000" stroke="#000" stroke-width="0.35" textLength="11.5" lengthAdjust="spacingAndGlyphs">30</text><text x="112.0" y="69.7" font-size="10.5" fill="#000" stroke="#000" stroke-width="0.35" textLength="11.5" lengthAdjust="spacingAndGlyphs">60</text><text x="156.5" y="86" font-size="10.5" fill="#000" stroke="#000" stroke-width="0.35" textLength="11.5" lengthAdjust="spacingAndGlyphs">30</text><text x="172.0" y="69.7" font-size="10.5" fill="#000" stroke="#000" stroke-width="0.35" textLength="11.5" lengthAdjust="spacingAndGlyphs">60</text><text x="36.5" y="166" font-size="10.5" fill="#000" stroke="#000" stroke-width="0.35" textLength="11.5" lengthAdjust="spacingAndGlyphs">30</text><text x="52.0" y="149.7" font-size="10.5" fill="#000" stroke="#000" stroke-width="0.35" textLength="11.5" lengthAdjust="spacingAndGlyphs">60</text><text x="96.5" y="166" font-size="10.5" fill="#000" stroke="#000" stroke-width="0.35" textLength="11.5" lengthAdjust="spacingAndGlyphs">30</text><text x="112.0" y="149.7" font-size="10.5" fill="#000" stroke="#000" stroke-width="0.35" textLength="11.5" lengthAdjust="spacingAndGlyphs">60</text><text x="156.5" y="166" font-size="10.5" fill="#000" stroke="#000" stroke-width="0.35" textLength="11.5" lengthAdjust="spacingAndGlyphs">30</text><text x="172.0" y="149.7" font-size="10.5" fill="#000" stroke="#000" stroke-width="0.35" textLength="11.5" lengthAdjust="spacingAndGlyphs">60</text><text x="36.5" y="246" font-size="10.5" fill="#000" stroke="#000" stroke-width="0.35" textLength="11.5" lengthAdjust="spacingAndGlyphs">30</text><text x="52.0" y="229.7" font-size="10.5" fill="#000" stroke="#000" stroke-width="0.35" textLength="11.5" lengthAdjust="spacingAndGlyphs">60</text><text x="96.5" y="246" font-size="10.5" fill="#000" stroke="#000" stroke-width="0.35" textLength="11.5" lengthAdjust="spacingAndGlyphs">30</text><text x="112.0" y="229.7" font-size="10.5" fill="#000" stroke="#000" stroke-width="0.35" textLength="11.5" lengthAdjust="spacingAndGlyphs">60</text><text x="156.5" y="246" font-size="10.5" fill="#000" stroke="#000" stroke-width="0.35" textLength="11.5" lengthAdjust="spacingAndGlyphs">30</text><text x="172.0" y="229.7" font-size="10.5" fill="#000" stroke="#000" stroke-width="0.35" textLength="11.5" lengthAdjust="spacingAndGlyphs">60</text><text x="36.5" y="326" font-size="10.5" fill="#000" stroke="#000" stroke-width="0.35" textLength="11.5" lengthAdjust="spacingAndGlyphs">30</text><text x="52.0" y="309.7" font-size="10.5" fill="#000" stroke="#000" stroke-width="0.35" textLength="11.5" lengthAdjust="spacingAndGlyphs">60</text><text x="96.5" y="326" font-size="10.5" fill="#000" stroke="#000" stroke-width="0.35" textLength="11.5" lengthAdjust="spacingAndGlyphs">30</text><text x="112.0" y="309.7" font-size="10.5" fill="#000" stroke="#000" stroke-width="0.35" textLength="11.5" lengthAdjust="spacingAndGlyphs">60</text><text x="156.5" y="326" font-size="10.5" fill="#000" stroke="#000" stroke-width="0.35" textLength="11.5" lengthAdjust="spacingAndGlyphs">30</text><text x="172.0" y="309.7" font-size="10.5" fill="#000" stroke="#000" stroke-width="0.35" textLength="11.5" lengthAdjust="spacingAndGlyphs">60</text><text x="36.5" y="406" font-size="10.5" fill="#000" stroke="#000" stroke-width="0.35" textLength="11.5" lengthAdjust="spacingAndGlyphs">30</text><text x="52.0" y="389.7" font-size="10.5" fill="#000" stroke="#000" stroke-width="0.35" textLength="11.5" lengthAdjust="spacingAndGlyphs">60</text><text x="96.5" y="406" font-size="10.5" fill="#000" stroke="#000" stroke-width="0.35" textLength="11.5" lengthAdjust="spacingAndGlyphs">30</text><text x="112.0" y="389.7" font-size="10.5" fill="#000" stroke="#000" stroke-width="0.35" textLength="11.5" lengthAdjust="spacingAndGlyphs">60</text><text x="156.5" y="406" font-size="10.5" fill="#000" stroke="#000" stroke-width="0.35" textLength="11.5" lengthAdjust="spacingAndGlyphs">30</text><text x="172.0" y="389.7" font-size="10.5" fill="#000" stroke="#000" stroke-width="0.35" textLength="11.5" lengthAdjust="spacingAndGlyphs">60</text><text x="36.5" y="492" font-size="10.5" fill="#000" stroke="#000" stroke-width="0.35" textLength="11.5" lengthAdjust="spacingAndGlyphs">30</text><text x="50.5" y="474.2" font-size="10.5" fill="#000" stroke="#000" stroke-width="0.35" textLength="11.5" lengthAdjust="spacingAndGlyphs">60</text><text x="96.5" y="492" font-size="10.5" fill="#000" stroke="#000" stroke-width="0.35" textLength="11.5" lengthAdjust="spacingAndGlyphs">30</text><text x="110.5" y="474.2" font-size="10.5" fill="#000" stroke="#000" stroke-width="0.35" textLength="11.5" lengthAdjust="spacingAndGlyphs">60</text><text x="156.5" y="492" font-size="10.5" fill="#000" stroke="#000" stroke-width="0.35" textLength="11.5" lengthAdjust="spacingAndGlyphs">30</text><text x="170.5" y="474.2" font-size="10.5" fill="#000" stroke="#000" stroke-width="0.35" textLength="11.5" lengthAdjust="spacingAndGlyphs">60</text><text x="36.5" y="566" font-size="10.5" fill="#000" stroke="#000" stroke-width="0.35" textLength="11.5" lengthAdjust="spacingAndGlyphs">30</text><text x="52.0" y="549.7" font-size="10.5" fill="#000" stroke="#000" stroke-width="0.35" textLength="11.5" lengthAdjust="spacingAndGlyphs">60</text><text x="96.5" y="566" font-size="10.5" fill="#000" stroke="#000" stroke-width="0.35" textLength="11.5" lengthAdjust="spacingAndGlyphs">30</text><text x="112.0" y="549.7" font-size="10.5" fill="#000" stroke="#000" stroke-width="0.35" textLength="11.5" lengthAdjust="spacingAndGlyphs">60</text><text x="156.5" y="566" font-size="10.5" fill="#000" stroke="#000" stroke-width="0.35" textLength="11.5" lengthAdjust="spacingAndGlyphs">30</text><text x="172.0" y="549.7" font-size="10.5" fill="#000" stroke="#000" stroke-width="0.35" textLength="11.5" lengthAdjust="spacingAndGlyphs">60</text></g>
<rect x="566.0" y="521.0" width="5" height="6" fill="#ffd000" shape-rendering="crispEdges"/>
<rect x="567.0" y="522.5" width="3" height="3" fill="#ffb000" shape-rendering="crispEdges"/>
<rect x="565.7" y="541.0" width="5.5" height="6" fill="#50e8c0" shape-rendering="crispEdges"/>
<rect x="555.2" y="546.5" width="11.8" height="5.5" fill="#80f090" shape-rendering="crispEdges"/>
<rect x="550.8" y="552.0" width="5.2" height="5" fill="#70e890" shape-rendering="crispEdges"/>
<rect x="574.0" y="546.0" width="4" height="6" fill="#50e8b0" shape-rendering="crispEdges"/>
<rect x="578.0" y="546.0" width="4" height="6" fill="#a0f060" shape-rendering="crispEdges"/>
<rect x="585.4" y="546.0" width="3.9" height="6" fill="#90f070" shape-rendering="crispEdges"/>
<rect x="589.3" y="552.0" width="3.9" height="10" fill="#b0f040" shape-rendering="crispEdges"/>
<rect x="566.0" y="556.7" width="8.2" height="5.3" fill="#50e0c0" shape-rendering="crispEdges"/>
<rect x="570.0" y="552.0" width="4" height="5" fill="#70e890" shape-rendering="crispEdges"/>
<rect x="582.0" y="562.0" width="7.3" height="6" fill="#60e8b0" shape-rendering="crispEdges"/>
<rect x="585.4" y="568.0" width="3.9" height="4" fill="#40e0d0" shape-rendering="crispEdges"/>
<rect x="555.0" y="571.8" width="5" height="5.2" fill="#60e8b0" shape-rendering="crispEdges"/>
<rect x="562.8" y="571.8" width="4.6" height="5.2" fill="#80f080" shape-rendering="crispEdges"/>
<rect x="582.0" y="571.8" width="4.3" height="5.2" fill="#80f080" shape-rendering="crispEdges"/>
<rect x="592.8" y="571.8" width="4.4" height="5.2" fill="#90f070" shape-rendering="crispEdges"/>
<path d="M597.2 551.7h4.2v-5.5z" fill="#90e870"/>
<path d="M556 547.2l10 2.6M570.5 553l3 4.5" stroke="#000" stroke-width="0.8" fill="none"/>
<rect x="525.0" y="87.5" width="4" height="4" fill="#0020e0" shape-rendering="crispEdges"/>
<rect x="597.5" y="82.0" width="3" height="5" fill="#0030e0" shape-rendering="crispEdges"/>
<rect x="548.5" y="147.0" width="3" height="4" fill="#0030e0" shape-rendering="crispEdges"/>
<rect x="551.5" y="172.5" width="4" height="4" fill="#0028f0" shape-rendering="crispEdges"/>
<rect x="563.0" y="212.0" width="4" height="5" fill="#20a8f0" shape-rendering="crispEdges"/>
<rect x="566.5" y="216.5" width="4" height="5" fill="#1080f0" shape-rendering="crispEdges"/>
<rect x="582.0" y="221.5" width="4" height="5" fill="#1070f0" shape-rendering="crispEdges"/>
<rect x="593.0" y="216.5" width="4" height="5" fill="#1080f0" shape-rendering="crispEdges"/>
<rect x="600.5" y="227.5" width="3" height="3" fill="#1070f0" shape-rendering="crispEdges"/>
<rect x="562.5" y="247.0" width="4" height="5" fill="#0058f0" shape-rendering="crispEdges"/>
<rect x="559.0" y="251.5" width="4" height="5" fill="#0050f0" shape-rendering="crispEdges"/>
<rect x="570.0" y="292.0" width="4" height="5" fill="#20b8f8" shape-rendering="crispEdges"/>
<rect x="582.0" y="301.5" width="4" height="5" fill="#2090f0" shape-rendering="crispEdges"/>
<rect x="570.0" y="306.5" width="4" height="5" fill="#1078f0" shape-rendering="crispEdges"/>
<rect x="544.0" y="311.5" width="4" height="5" fill="#30b8f8" shape-rendering="crispEdges"/>
<rect x="593.5" y="317.0" width="3" height="4" fill="#1070e8" shape-rendering="crispEdges"/>
<rect x="570.0" y="322.0" width="4" height="5" fill="#0868f0" shape-rendering="crispEdges"/>
<rect x="574.0" y="327.0" width="3" height="8" fill="#0868f0" shape-rendering="crispEdges"/>
<rect x="555.0" y="337.5" width="4" height="4" fill="#0868f0" shape-rendering="crispEdges"/>
<rect x="597.5" y="347.0" width="3" height="4" fill="#40e0b0" shape-rendering="crispEdges"/>
<rect x="574.0" y="402.0" width="3" height="5" fill="#0868f0" shape-rendering="crispEdges"/>
<rect x="570.0" y="407.0" width="4" height="4" fill="#20a0f8" shape-rendering="crispEdges"/>
<rect x="585.5" y="401.5" width="3" height="5" fill="#0868f0" shape-rendering="crispEdges"/>
<rect x="582.0" y="407.0" width="4" height="4" fill="#20a0f8" shape-rendering="crispEdges"/>
<rect x="589.0" y="406.5" width="4" height="5" fill="#1080f0" shape-rendering="crispEdges"/>
<rect x="593.0" y="421.5" width="4" height="5" fill="#30b8f8" shape-rendering="crispEdges"/>
<rect x="589.0" y="427.0" width="4" height="4" fill="#70e0a0" shape-rendering="crispEdges"/>
<rect x="570.0" y="461.5" width="4" height="5" fill="#20b0ff" shape-rendering="crispEdges"/>
<rect x="597.0" y="462.5" width="3" height="3" fill="#20c0a0" shape-rendering="crispEdges"/>
<rect x="600.5" y="477.0" width="3" height="4" fill="#30d8e8" shape-rendering="crispEdges"/>
<rect x="589.0" y="481.5" width="4" height="6" fill="#2090ff" shape-rendering="crispEdges"/>
<rect x="547.5" y="497.5" width="4" height="4" fill="#60e0a0" shape-rendering="crispEdges"/>
<rect x="605" y="37" width="7" height="78" fill="url(#jet)" shape-rendering="crispEdges"/>
<rect x="605" y="117" width="7" height="78" fill="url(#jet)" shape-rendering="crispEdges"/>
<rect x="605" y="197" width="7" height="78" fill="url(#jet)" shape-rendering="crispEdges"/>
<rect x="605" y="277" width="7" height="78" fill="url(#jet)" shape-rendering="crispEdges"/>
<rect x="605" y="357" width="7" height="78" fill="url(#jet)" shape-rendering="crispEdges"/>
<rect x="605" y="437" width="7" height="78" fill="url(#jet)" shape-rendering="crispEdges"/>
<rect x="605" y="517" width="7" height="78" fill="url(#jet)" shape-rendering="crispEdges"/>
<g fill="#fff" shape-rendering="crispEdges"><rect x="4" y="36" width="1" height="561"/><rect x="64" y="36" width="1" height="561"/><rect x="124" y="36" width="1" height="561"/><rect x="184" y="36" width="1" height="561"/><rect x="244" y="36" width="1" height="561"/><rect x="304" y="36" width="1" height="561"/><rect x="364" y="36" width="1" height="561"/><rect x="424" y="36" width="1" height="561"/><rect x="484" y="36" width="1" height="561"/><rect x="544" y="36" width="1" height="561"/><rect x="604" y="36" width="1" height="561"/><rect x="612" y="36" width="1" height="561"/><rect x="4" y="36" width="609" height="1"/><rect x="4" y="116" width="609" height="1"/><rect x="4" y="196" width="609" height="1"/><rect x="4" y="276" width="609" height="1"/><rect x="4" y="356" width="609" height="1"/><rect x="4" y="436" width="609" height="1"/><rect x="4" y="516" width="609" height="1"/><rect x="4" y="596" width="609" height="1"/></g>
<g filter="url(#gray)"><text x="152.5" y="15.2" font-size="13" fill="#fff" textLength="78.1" lengthAdjust="spacingAndGlyphs" stroke="#fff" stroke-width="0.55">Cassini/MIMI</text>
<text x="236.3" y="15.2" font-size="13" fill="#fff" textLength="27.7" lengthAdjust="spacingAndGlyphs" stroke="#fff" stroke-width="0.55">Inca</text>
<text x="266.5" y="15.2" font-size="13" fill="#fff" textLength="36.5" lengthAdjust="spacingAndGlyphs" stroke="#fff" stroke-width="0.55">mTOF</text>
<text x="312.7" y="15.2" font-size="13" fill="#fff" textLength="57.3" lengthAdjust="spacingAndGlyphs" stroke="#fff" stroke-width="0.55">2004-182</text>
<text x="381.8" y="15.2" font-size="13" fill="#fff" textLength="31.7" lengthAdjust="spacingAndGlyphs" stroke="#fff" stroke-width="0.55">Stare</text>
<text x="426.0" y="15.2" font-size="13" fill="#fff" textLength="26.0" lengthAdjust="spacingAndGlyphs" stroke="#fff" stroke-width="0.55">Ions</text>
<text x="456.8" y="15.2" font-size="13" fill="#fff" textLength="26.8" lengthAdjust="spacingAndGlyphs" stroke="#fff" stroke-width="0.55">Only</text>
<text x="90.3" y="31.6" font-size="13" fill="#fff" textLength="8.6" lengthAdjust="spacingAndGlyphs" stroke="#fff" stroke-width="0.55">R</text>
<text x="134.4" y="31.6" font-size="13" fill="#fff" textLength="33.0" lengthAdjust="spacingAndGlyphs" stroke="#fff" stroke-width="0.55">12.02</text>
<text x="172.4" y="31.6" font-size="13" fill="#fff" textLength="17.6" lengthAdjust="spacingAndGlyphs" stroke="#fff" stroke-width="0.55">Lat</text>
<text x="194.0" y="31.6" font-size="13" fill="#fff" textLength="38.5" lengthAdjust="spacingAndGlyphs" stroke="#fff" stroke-width="0.55">-12.99</text>
<text x="237.5" y="31.6" font-size="13" fill="#fff" textLength="16.3" lengthAdjust="spacingAndGlyphs" stroke="#fff" stroke-width="0.55">LT</text>
<text x="256.3" y="31.6" font-size="13" fill="#fff" textLength="30.0" lengthAdjust="spacingAndGlyphs" stroke="#fff" stroke-width="0.55">0839</text>
<text x="291.3" y="31.6" font-size="13" fill="#fff" textLength="6.5" lengthAdjust="spacingAndGlyphs" stroke="#fff" stroke-width="0.55">L</text>
<text x="341.7" y="31.6" font-size="13" fill="#fff" textLength="33.0" lengthAdjust="spacingAndGlyphs" stroke="#fff" stroke-width="0.55">12.66</text>
<text x="379.5" y="31.6" font-size="13" fill="#fff" textLength="22.2" lengthAdjust="spacingAndGlyphs" stroke="#fff" stroke-width="0.55">Lon</text>
<text x="442.2" y="31.6" font-size="13" fill="#fff" textLength="41.4" lengthAdjust="spacingAndGlyphs" stroke="#fff" stroke-width="0.55">310.83</text>
<text x="493.4" y="31.6" font-size="13" fill="#fff" textLength="57.6" lengthAdjust="spacingAndGlyphs" stroke="#fff" stroke-width="0.55">MIMI/APL</text>
<text x="99.3" y="41.3" font-size="13.5" fill="#fff" textLength="30.3" lengthAdjust="spacingAndGlyphs" stroke="#fff" stroke-width="0.8">satur</text>
<text x="298.0" y="41.3" font-size="13.5" fill="#fff" textLength="38.0" lengthAdjust="spacingAndGlyphs" stroke="#fff" stroke-width="0.8">saturn</text>
<text x="402.3" y="40.9" font-size="13.5" fill="#fff" textLength="36.0" lengthAdjust="spacingAndGlyphs" stroke="#fff" stroke-width="0.8">skr-wl</text>
<text x="713.3" y="15.0" font-size="11.8" fill="#fff" textLength="46.5" lengthAdjust="spacingAndGlyphs" stroke="#fff" stroke-width="0.55">Log Cnts</text>
<text y="29.2" font-size="11.8" fill="#fff" stroke="#fff" stroke-width="0.55"><tspan x="698" textLength="18.7" lengthAdjust="spacingAndGlyphs">(cm</tspan><tspan x="717.3" dy="-4.5" font-size="6.5">2</tspan><tspan x="721.3" dy="4.5" textLength="48.7" lengthAdjust="spacingAndGlyphs">-sr-s-keV)</tspan><tspan x="772.6" dy="-5.5" font-size="5.5">1</tspan></text>
<text x="616.8" y="45.8" font-size="10.6" fill="#fff" textLength="30.2" lengthAdjust="spacingAndGlyphs" stroke="#fff" stroke-width="0.55">0.6671</text>
<text x="616.9" y="81.8" font-size="10.6" fill="#fff" textLength="35.1" lengthAdjust="spacingAndGlyphs" stroke="#fff" stroke-width="0.55">-0.6295</text>
<text x="616.9" y="116.6" font-size="10.6" fill="#fff" textLength="29.6" lengthAdjust="spacingAndGlyphs" stroke="#fff" stroke-width="0.55">-1.926</text>
<text x="661.0" y="76.5" font-size="11.9" fill="#fff" textLength="52.2" lengthAdjust="spacingAndGlyphs" stroke="#fff" stroke-width="0.55">Hydrogen</text>
<text x="661.0" y="90.8" font-size="11.9" fill="#fff" textLength="64.5" lengthAdjust="spacingAndGlyphs" stroke="#fff" stroke-width="0.55">149-227 keV</text>
<text x="616.8" y="125.8" font-size="10.6" fill="#fff" textLength="30.2" lengthAdjust="spacingAndGlyphs" stroke="#fff" stroke-width="0.55">0.4677</text>
<text x="620.2" y="161.8" font-size="10.6" fill="#fff" textLength="31.8" lengthAdjust="spacingAndGlyphs" stroke="#fff" stroke-width="0.55">0.7292</text>
<text x="616.9" y="196.6" font-size="10.6" fill="#fff" textLength="29.6" lengthAdjust="spacingAndGlyphs" stroke="#fff" stroke-width="0.55">-1.926</text>
<text x="661.0" y="156.5" font-size="11.9" fill="#fff" textLength="52.2" lengthAdjust="spacingAndGlyphs" stroke="#fff" stroke-width="0.55">Hydrogen</text>
<text x="661.0" y="170.8" font-size="11.9" fill="#fff" textLength="57.8" lengthAdjust="spacingAndGlyphs" stroke="#fff" stroke-width="0.55">90-149 keV</text>
<text x="617.4" y="205.8" font-size="10.6" fill="#fff" textLength="25.1" lengthAdjust="spacingAndGlyphs" stroke="#fff" stroke-width="0.55">1.273</text>
<text x="620.2" y="241.8" font-size="10.6" fill="#fff" textLength="32.1" lengthAdjust="spacingAndGlyphs" stroke="#fff" stroke-width="0.55">0.3266</text>
<text x="616.9" y="276.6" font-size="10.6" fill="#fff" textLength="29.6" lengthAdjust="spacingAndGlyphs" stroke="#fff" stroke-width="0.55">-1.926</text>
<text x="661.0" y="236.5" font-size="11.9" fill="#fff" textLength="52.2" lengthAdjust="spacingAndGlyphs" stroke="#fff" stroke-width="0.55">Hydrogen</text>
<text x="661.0" y="250.8" font-size="11.9" fill="#fff" textLength="51.8" lengthAdjust="spacingAndGlyphs" stroke="#fff" stroke-width="0.55">55-90 keV</text>
<text x="617.4" y="285.8" font-size="10.6" fill="#fff" textLength="25.1" lengthAdjust="spacingAndGlyphs" stroke="#fff" stroke-width="0.55">1.747</text>
<text x="620.2" y="321.8" font-size="10.6" fill="#fff" textLength="37.8" lengthAdjust="spacingAndGlyphs" stroke="#fff" stroke-width="0.55">0.06970</text>
<text x="616.9" y="356.6" font-size="10.6" fill="#fff" textLength="29.6" lengthAdjust="spacingAndGlyphs" stroke="#fff" stroke-width="0.55">-1.926</text>
<text x="661.0" y="316.5" font-size="11.9" fill="#fff" textLength="52.2" lengthAdjust="spacingAndGlyphs" stroke="#fff" stroke-width="0.55">Hydrogen</text>
<text x="661.0" y="330.8" font-size="11.9" fill="#fff" textLength="51.8" lengthAdjust="spacingAndGlyphs" stroke="#fff" stroke-width="0.55">35-55 keV</text>
<text x="616.8" y="365.8" font-size="10.6" fill="#fff" textLength="25.7" lengthAdjust="spacingAndGlyphs" stroke="#fff" stroke-width="0.55">2.221</text>
<text x="616.8" y="401.8" font-size="10.6" fill="#fff" textLength="31.7" lengthAdjust="spacingAndGlyphs" stroke="#fff" stroke-width="0.55">0.1475</text>
<text x="616.9" y="436.6" font-size="10.6" fill="#fff" textLength="29.6" lengthAdjust="spacingAndGlyphs" stroke="#fff" stroke-width="0.55">-1.926</text>
<text x="661.0" y="396.5" font-size="11.9" fill="#fff" textLength="52.2" lengthAdjust="spacingAndGlyphs" stroke="#fff" stroke-width="0.55">Hydrogen</text>
<text x="661.0" y="410.8" font-size="11.9" fill="#fff" textLength="51.8" lengthAdjust="spacingAndGlyphs" stroke="#fff" stroke-width="0.55">24-35 keV</text>
<text x="616.8" y="445.8" font-size="10.6" fill="#fff" textLength="26.2" lengthAdjust="spacingAndGlyphs" stroke="#fff" stroke-width="0.55">3.095</text>
<text x="616.8" y="481.8" font-size="10.6" fill="#fff" textLength="32.8" lengthAdjust="spacingAndGlyphs" stroke="#fff" stroke-width="0.55">0.5842</text>
<text x="616.9" y="516.6" font-size="10.6" fill="#fff" textLength="29.6" lengthAdjust="spacingAndGlyphs" stroke="#fff" stroke-width="0.55">-1.926</text>
<text x="661.0" y="476.5" font-size="11.9" fill="#fff" textLength="52.2" lengthAdjust="spacingAndGlyphs" stroke="#fff" stroke-width="0.55">Hydrogen</text>
<text x="661.0" y="490.8" font-size="11.9" fill="#fff" textLength="51.6" lengthAdjust="spacingAndGlyphs" stroke="#fff" stroke-width="0.55">13-24 keV</text>
<text x="616.8" y="525.8" font-size="10.6" fill="#fff" textLength="25.5" lengthAdjust="spacingAndGlyphs" stroke="#fff" stroke-width="0.55">4.617</text>
<text x="616.8" y="561.8" font-size="10.6" fill="#fff" textLength="25.7" lengthAdjust="spacingAndGlyphs" stroke="#fff" stroke-width="0.55">1.345</text>
<text x="620.8" y="596.6" font-size="10.6" fill="#fff" textLength="26.0" lengthAdjust="spacingAndGlyphs" stroke="#fff" stroke-width="0.55">1.926</text>
<text x="661.0" y="556.5" font-size="11.9" fill="#fff" textLength="52.2" lengthAdjust="spacingAndGlyphs" stroke="#fff" stroke-width="0.55">Hydrogen</text>
<text x="661.0" y="570.8" font-size="11.9" fill="#fff" textLength="44.2" lengthAdjust="spacingAndGlyphs" stroke="#fff" stroke-width="0.55">5-13 keV</text>
<text x="701.0" y="581.7" font-size="10" fill="#fff" textLength="93.0" lengthAdjust="spacingAndGlyphs" stroke="#fff" stroke-width="0.55">B-field Particle Flow</text>
<text x="10.2" y="609.0" font-size="10.7" fill="#fff" textLength="49.5" lengthAdjust="spacingAndGlyphs" stroke="#fff" stroke-width="0.55">182T12:40</text>
<text x="82.0" y="609.0" font-size="10.7" fill="#fff" textLength="26.0" lengthAdjust="spacingAndGlyphs" stroke="#fff" stroke-width="0.55">12:44</text>
<text x="142.0" y="609.0" font-size="10.7" fill="#fff" textLength="26.0" lengthAdjust="spacingAndGlyphs" stroke="#fff" stroke-width="0.55">12:48</text>
<text x="202.0" y="609.0" font-size="10.7" fill="#fff" textLength="26.0" lengthAdjust="spacingAndGlyphs" stroke="#fff" stroke-width="0.55">12:52</text>
<text x="262.0" y="609.0" font-size="10.7" fill="#fff" textLength="26.0" lengthAdjust="spacingAndGlyphs" stroke="#fff" stroke-width="0.55">12:56</text>
<text x="322.0" y="609.0" font-size="10.7" fill="#fff" textLength="26.0" lengthAdjust="spacingAndGlyphs" stroke="#fff" stroke-width="0.55">13:00</text>
<text x="382.0" y="609.0" font-size="10.7" fill="#fff" textLength="26.0" lengthAdjust="spacingAndGlyphs" stroke="#fff" stroke-width="0.55">13:04</text>
<text x="442.0" y="609.0" font-size="10.7" fill="#fff" textLength="26.0" lengthAdjust="spacingAndGlyphs" stroke="#fff" stroke-width="0.55">13:08</text>
<text x="502.0" y="609.0" font-size="10.7" fill="#fff" textLength="26.0" lengthAdjust="spacingAndGlyphs" stroke="#fff" stroke-width="0.55">13:12</text>
<text x="562.0" y="609.0" font-size="10.7" fill="#fff" textLength="26.0" lengthAdjust="spacingAndGlyphs" stroke="#fff" stroke-width="0.55">13:16</text>
<rect x="605" y="76" width="1" height="1" fill="#fff"/><rect x="611" y="76" width="1" height="1" fill="#fff"/>
<rect x="605" y="156" width="1" height="1" fill="#fff"/><rect x="611" y="156" width="1" height="1" fill="#fff"/>
<rect x="605" y="236" width="1" height="1" fill="#fff"/><rect x="611" y="236" width="1" height="1" fill="#fff"/>
<rect x="605" y="316" width="1" height="1" fill="#fff"/><rect x="611" y="316" width="1" height="1" fill="#fff"/>
<rect x="605" y="396" width="1" height="1" fill="#fff"/><rect x="611" y="396" width="1" height="1" fill="#fff"/>
<rect x="605" y="476" width="1" height="1" fill="#fff"/><rect x="611" y="476" width="1" height="1" fill="#fff"/>
<rect x="605" y="556" width="1" height="1" fill="#fff"/><rect x="611" y="556" width="1" height="1" fill="#fff"/></g>
</svg></body></html>
